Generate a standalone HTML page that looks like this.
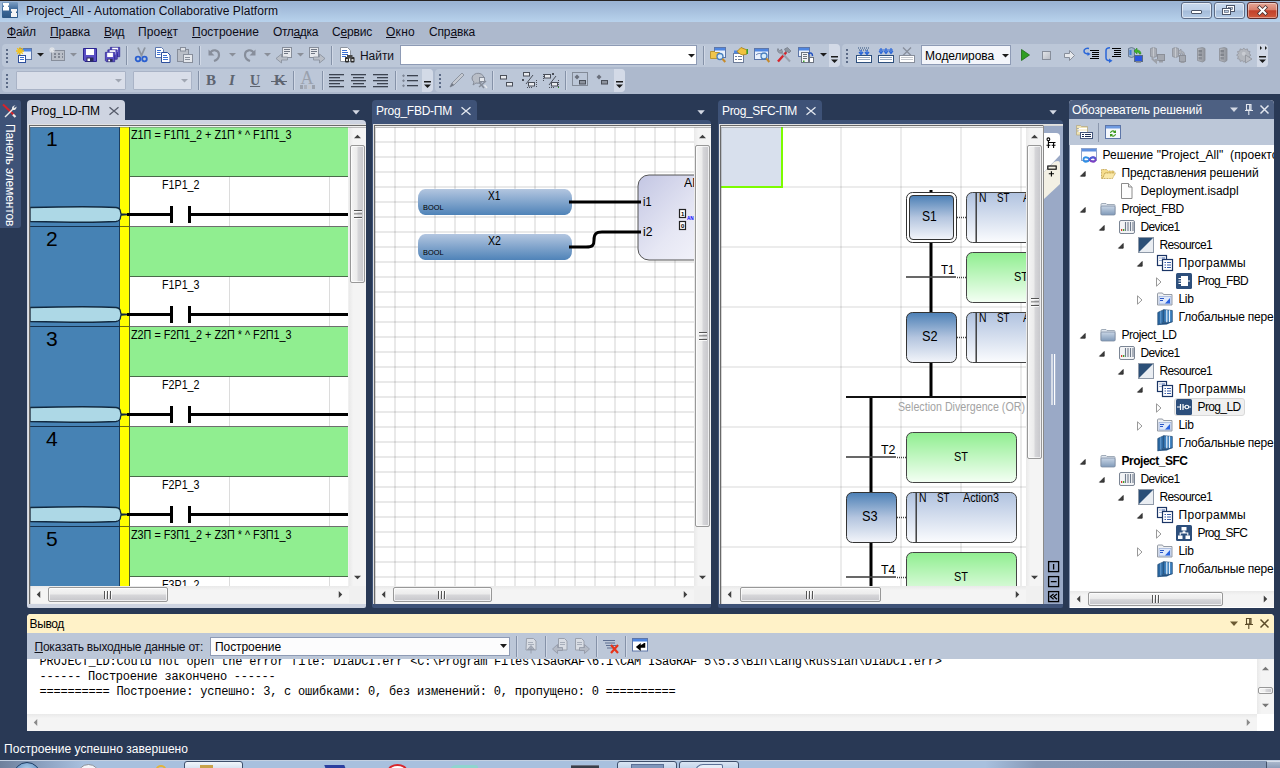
<!DOCTYPE html>
<html lang="ru">
<head>
<meta charset="utf-8">
<title>Project_All - Automation Collaborative Platform</title>
<style>
*{box-sizing:border-box;margin:0;padding:0}
html,body{width:1280px;height:768px;overflow:hidden}
body{position:relative;background:#293955;font-family:"Liberation Sans",sans-serif;font-size:12px;color:#000}
.a{position:absolute}
.t{position:absolute;white-space:nowrap;line-height:1;transform-origin:0 50%}
svg{overflow:visible}
.tb{position:absolute;background:#bcc7d8;border-radius:4px}
.ov{position:absolute;background:#d3dae7;border-radius:0 4px 4px 0}
.gd{position:absolute;width:2px;height:2px;background:#5b6a86}
.sep{position:absolute;width:1px;background:#8592a8;box-shadow:1px 0 0 #d0d8e6}
.sb{position:absolute;background:#f0f0f0}
.thv{position:absolute;border:1px solid #989898;border-radius:2px;background:linear-gradient(90deg,#f5f5f5 0,#ececec 45%,#d6d6d9 55%,#c6c6ca 100%);box-shadow:inset 0 0 0 1px rgba(255,255,255,.7)}
.thh{position:absolute;border:1px solid #989898;border-radius:2px;background:linear-gradient(180deg,#f5f5f5 0,#ececec 45%,#d6d6d9 55%,#c6c6ca 100%);box-shadow:inset 0 0 0 1px rgba(255,255,255,.7)}
.arr{position:absolute;width:0;height:0;border:4px solid transparent}
.au{border-bottom:4px solid #404040;border-top:0;border-left-width:4px;border-right-width:4px}
.ad{border-top:4px solid #404040;border-bottom:0}
.al{border-right:4px solid #404040;border-left:0}
.ar{border-left:4px solid #404040;border-right:0}
</style>
</head>
<body>
<div class="a" style="left:0px;top:0px;width:1280px;height:22px;background:linear-gradient(180deg,#9bb4d4 0,#9bb4d4 10%,#b8d2ec 100%);border-top:1px solid #262322"></div>
<svg class="a" style="left:2px;top:2px;" width="16" height="16" viewBox="0 0 16 16"><defs><linearGradient id="gapp" x1="0" y1="0" x2="0" y2="1"><stop offset="0" stop-color="#7d9fc4"/><stop offset=".45" stop-color="#3f6a9a"/><stop offset="1" stop-color="#2c5684"/></linearGradient></defs><rect x="0" y="0" width="16" height="16" rx="1" fill="url(#gapp)"/><path d="M1 1h6v2.500h-1v1.500h1v3.500h-6v-3.500h1v-1.500h-1z" fill="#fff"/><path d="M9 7h6v2.500h-1v1.500h1v4h-6v-4h1v-1.500h-1z" fill="#f4f4f4"/></svg>
<div class="t" style="left:26px;top:5.44px;color:#0c0c18;letter-spacing:0.054px;text-shadow:0 0 5px rgba(255,255,255,.55);">Project_All - Automation Collaborative Platform</div>
<div class="a" style="left:1181px;top:2px;width:31px;height:17px;border:1px solid #5d6b85;border-radius:3px;background:linear-gradient(180deg,#c9d9ee 0,#bccfe8 48%,#a4bbd8 52%,#b5cbe6 100%);box-shadow:inset 0 0 0 1px rgba(255,255,255,.55)"></div>
<div class="a" style="left:1191px;top:10px;width:11px;height:4px;border:1px solid #4b5468;background:#fff;border-radius:1px"></div>
<div class="a" style="left:1214px;top:2px;width:31px;height:17px;border:1px solid #5d6b85;border-radius:3px;background:linear-gradient(180deg,#c9d9ee 0,#bccfe8 48%,#a4bbd8 52%,#b5cbe6 100%);box-shadow:inset 0 0 0 1px rgba(255,255,255,.55)"></div>
<svg class="a" style="left:1222px;top:5px;" width="14" height="11" viewBox="0 0 14 11"><rect x="4.5" y="0.5" width="8" height="6" fill="#fff" stroke="#4b5468"/><rect x="6.5" y="2.5" width="4" height="2" fill="#b9cde6" stroke="#4b5468" stroke-width=".6"/><rect x="0.5" y="3.5" width="8" height="6" fill="#fff" stroke="#4b5468"/><rect x="2.5" y="5.5" width="4" height="2" fill="#b9cde6" stroke="#4b5468" stroke-width=".6"/></svg>
<div class="a" style="left:1247px;top:2px;width:31px;height:17px;border:1px solid #5a2a2a;border-radius:3px;background:linear-gradient(180deg,#e5a898 0,#d77e6b 45%,#c2402a 52%,#cf5a3c 100%);box-shadow:inset 0 0 0 1px rgba(255,255,255,.4)"></div>
<svg class="a" style="left:1257px;top:6px;" width="12" height="9" viewBox="0 0 12 9"><path d="M2.500 1.500L8.500 7.500M8.500 1.500L2.500 7.500" stroke="#4a3030" stroke-width="3.600" stroke-linecap="square"/><path d="M2.500 1.500L8.500 7.500M8.500 1.500L2.500 7.500" stroke="#fff" stroke-width="2" stroke-linecap="square"/></svg>
<div class="a" style="left:0px;top:22px;width:1280px;height:21px;background:#adb9cd"></div>
<div class="t" style="left:7px;top:26.04px;color:#0c0c18;letter-spacing:-0.129px;"><u>Ф</u>айл</div>
<div class="t" style="left:50px;top:26.04px;color:#0c0c18;letter-spacing:-0.091px;"><u>П</u>равка</div>
<div class="t" style="left:104px;top:26.04px;color:#0c0c18;letter-spacing:-0.578px;"><u>В</u>ид</div>
<div class="t" style="left:138px;top:26.04px;color:#0c0c18;letter-spacing:0.076px;">Прое<u>к</u>т</div>
<div class="t" style="left:192px;top:26.04px;color:#0c0c18;letter-spacing:0.017px;"><u>П</u>остроение</div>
<div class="t" style="left:273px;top:26.04px;color:#0c0c18;letter-spacing:-0.353px;">Отл<u>а</u>дка</div>
<div class="t" style="left:332px;top:26.04px;color:#0c0c18;letter-spacing:-0.188px;">С<u>е</u>рвис</div>
<div class="t" style="left:386px;top:26.04px;color:#0c0c18;letter-spacing:0.273px;"><u>О</u>кно</div>
<div class="t" style="left:429px;top:26.04px;color:#0c0c18;letter-spacing:-0.156px;">Спр<u>а</u>вка</div>
<div class="a" style="left:0px;top:43px;width:1280px;height:51px;background:#adb9cd"></div>
<!--TOOLBARS-->
<div class="tb" style="left:2px;top:43.5px;width:838px;height:23.0px;"></div>
<div class="gd" style="left:6px;top:48.5px;width:2px;height:2px;"></div>
<div class="gd" style="left:6px;top:52.5px;width:2px;height:2px;"></div>
<div class="gd" style="left:6px;top:56.5px;width:2px;height:2px;"></div>
<div class="gd" style="left:6px;top:60.5px;width:2px;height:2px;"></div>
<div class="ov" style="left:829px;top:43.5px;width:11px;height:23.0px;"></div>
<svg class="a" style="left:831px;top:55.5px;" width="7" height="8" viewBox="0 0 7 8"><rect x="0" y="0" width="7" height="1.500" fill="#1b1b1b"/><polygon points="0,3.500 7,3.500 3.500,7" fill="#1b1b1b"/></svg>
<div class="tb" style="left:842px;top:43.5px;width:426px;height:23.0px;"></div>
<div class="gd" style="left:846px;top:48.5px;width:2px;height:2px;"></div>
<div class="gd" style="left:846px;top:52.5px;width:2px;height:2px;"></div>
<div class="gd" style="left:846px;top:56.5px;width:2px;height:2px;"></div>
<div class="gd" style="left:846px;top:60.5px;width:2px;height:2px;"></div>
<div class="ov" style="left:1257px;top:43.5px;width:11px;height:23.0px;"></div>
<svg class="a" style="left:1259px;top:55.5px;" width="7" height="8" viewBox="0 0 7 8"><rect x="0" y="0" width="7" height="1.500" fill="#1b1b1b"/><polygon points="0,3.500 7,3.500 3.500,7" fill="#1b1b1b"/></svg>
<div class="tb" style="left:2px;top:68.5px;width:431px;height:23.5px;"></div>
<div class="gd" style="left:6px;top:73.5px;width:2px;height:2px;"></div>
<div class="gd" style="left:6px;top:77.5px;width:2px;height:2px;"></div>
<div class="gd" style="left:6px;top:81.5px;width:2px;height:2px;"></div>
<div class="gd" style="left:6px;top:85.5px;width:2px;height:2px;"></div>
<div class="ov" style="left:422px;top:68.5px;width:11px;height:23.5px;"></div>
<svg class="a" style="left:424px;top:81px;" width="7" height="8" viewBox="0 0 7 8"><rect x="0" y="0" width="7" height="1.500" fill="#1b1b1b"/><polygon points="0,3.500 7,3.500 3.500,7" fill="#1b1b1b"/></svg>
<div class="tb" style="left:435px;top:68.5px;width:190px;height:23.5px;"></div>
<div class="gd" style="left:439px;top:73.5px;width:2px;height:2px;"></div>
<div class="gd" style="left:439px;top:77.5px;width:2px;height:2px;"></div>
<div class="gd" style="left:439px;top:81.5px;width:2px;height:2px;"></div>
<div class="gd" style="left:439px;top:85.5px;width:2px;height:2px;"></div>
<div class="ov" style="left:614px;top:68.5px;width:11px;height:23.5px;"></div>
<svg class="a" style="left:616px;top:81px;" width="7" height="8" viewBox="0 0 7 8"><rect x="0" y="0" width="7" height="1.500" fill="#1b1b1b"/><polygon points="0,3.500 7,3.500 3.500,7" fill="#1b1b1b"/></svg>
<svg class="a" style="left:16px;top:47px;" width="16" height="16" viewBox="0 0 16 16"><rect x="3.500" y="1.500" width="12" height="11" fill="#e9f0fb" stroke="#5d76a8"/><rect x="4" y="2" width="11" height="2.500" fill="#4f86e0"/><rect x="2.500" y="8.500" width="7" height="7" fill="#fff" stroke="#2d4f9c"/><path d="M4 10.500h4M4 12.500h4" stroke="#3b6fd1"/><path d="M4 0v8M0 4h8M1.200 1.200l5.600 5.600M6.800 1.200l-5.600 5.600" stroke="#f2c21a" stroke-width="1.300"/></svg>
<svg class="a" style="left:37px;top:53px;" width="7" height="4" viewBox="0 0 7 4"><polygon points="0,0 7,0 3.500,3.500" fill="#1b1b1b"/></svg>
<svg class="a" style="left:49px;top:47px;" width="16" height="16" viewBox="0 0 16 16"><rect x="2.500" y="3.500" width="13" height="10" fill="#b9bec7" stroke="#878e9b"/><path d="M5 7h2M9 7h2M13 7h1M5 10h2M9 10h2M13 10h1" stroke="#6f7683" stroke-width="1.500"/><path d="M3 0v6M0 3h6M.900 .900l4.200 4.200M5.100 .900l-4.200 4.200" stroke="#e3e6ea" stroke-width="1.100"/></svg>
<svg class="a" style="left:70px;top:53px;" width="7" height="4" viewBox="0 0 7 4"><polygon points="0,0 7,0 3.500,3.500" fill="#8a8f99"/></svg>
<svg class="a" style="left:83px;top:48px;" width="16" height="16" viewBox="0 0 16 16"><path d="M.5 .5h13v13h-11.500l-1.500-1.500z" fill="#5a4fc4" stroke="#2b2490"/><rect x="3" y="1" width="8" height="6" fill="#fff"/><rect x="3.500" y="9.500" width="7" height="4" fill="#2b2b5a"/><rect x="4.500" y="10.500" width="2.500" height="2.500" fill="#fff"/></svg>
<svg class="a" style="left:105px;top:47px;" width="16" height="16" viewBox="0 0 16 16"><g transform="translate(5,0) scale(.72)"><path d="M.5 .5h13v13h-11.500l-1.500-1.500z" fill="#5a4fc4" stroke="#2b2490"/><rect x="3" y="1" width="8" height="6" fill="#fff"/><rect x="3.500" y="9.500" width="7" height="4" fill="#2b2b5a"/><rect x="4.500" y="10.500" width="2.500" height="2.500" fill="#fff"/></g><g transform="translate(2.500,2.500) scale(.72)"><path d="M.5 .5h13v13h-11.500l-1.500-1.500z" fill="#5a4fc4" stroke="#2b2490"/><rect x="3" y="1" width="8" height="6" fill="#fff"/><rect x="3.500" y="9.500" width="7" height="4" fill="#2b2b5a"/><rect x="4.500" y="10.500" width="2.500" height="2.500" fill="#fff"/></g><g transform="translate(0,5) scale(.72)"><path d="M.5 .5h13v13h-11.500l-1.500-1.500z" fill="#5a4fc4" stroke="#2b2490"/><rect x="3" y="1" width="8" height="6" fill="#fff"/><rect x="3.500" y="9.500" width="7" height="4" fill="#2b2b5a"/><rect x="4.500" y="10.500" width="2.500" height="2.500" fill="#fff"/></g></svg>
<div class="sep" style="left:126px;top:45.5px;width:1px;height:19px;"></div>
<svg class="a" style="left:134px;top:47px;" width="16" height="16" viewBox="0 0 16 16"><path d="M4 .5l4 9M11 .5l-4 9" stroke="#8d949f" stroke-width="1.800"/><circle cx="4" cy="12" r="2.300" fill="none" stroke="#2a5fd0" stroke-width="1.800"/><circle cx="10.500" cy="12" r="2.300" fill="none" stroke="#2a5fd0" stroke-width="1.800"/></svg>
<svg class="a" style="left:155px;top:47px;" width="16" height="16" viewBox="0 0 16 16"><path d="M.5 .5h6l2 2v8h-8z" fill="#fff" stroke="#5b77b0"/><path d="M2 3.500h4M2 5.500h3.500M2 7.500h3.500" stroke="#3b6fd1"/><path d="M6.500 5.500h6l2.500 2.500v7.500h-8.500z" fill="#fff" stroke="#2d4f9c"/><path d="M8 8.500h4M8 10.500h5M8 12.500h5" stroke="#3b6fd1"/></svg>
<svg class="a" style="left:177px;top:47px;" width="16" height="16" viewBox="0 0 16 16"><rect x=".5" y="2.500" width="11" height="12" fill="#b9bec7" stroke="#878e9b"/><rect x="3.500" y=".5" width="5" height="3.500" fill="#dfe2e7" stroke="#878e9b"/><rect x="6.500" y="7.500" width="9" height="8" fill="#e4e7ec" stroke="#878e9b"/><path d="M8 10.500h5M8 12.500h5" stroke="#878e9b"/></svg>
<div class="sep" style="left:199px;top:45.5px;width:1px;height:19px;"></div>
<svg class="a" style="left:208px;top:47px;" width="16" height="16" viewBox="0 0 16 16"><path d="M2 6.500c2-5 9-4 9 1.500 0 3-2 5-5 6" fill="none" stroke="#878e9b" stroke-width="2.200"/><path d="M.5 2.500v6h6z" fill="#878e9b"/></svg>
<svg class="a" style="left:229px;top:53px;" width="7" height="4" viewBox="0 0 7 4"><polygon points="0,0 7,0 3.500,3.500" fill="#8a8f99"/></svg>
<svg class="a" style="left:242px;top:47px;" width="16" height="16" viewBox="0 0 16 16"><path d="M12 6.500c-2-5-9-4-9 1.500 0 3 2 5 5 6" fill="none" stroke="#878e9b" stroke-width="2.200"/><path d="M13.500 2.500v6h-6z" fill="#878e9b"/></svg>
<svg class="a" style="left:264px;top:53px;" width="7" height="4" viewBox="0 0 7 4"><polygon points="0,0 7,0 3.500,3.500" fill="#8a8f99"/></svg>
<svg class="a" style="left:276px;top:47px;" width="16" height="16" viewBox="0 0 16 16"><rect x="6.500" y=".5" width="9" height="10" fill="#e6e8ec" stroke="#878e9b"/><path d="M8 2.500h6M8 4.500h6M8 6.500h4" stroke="#6f7683"/><path d="M0 11.500l5.500-4.500v3h6v3h-6v3z" fill="#b9bec7" stroke="#878e9b" stroke-width=".8"/></svg>
<svg class="a" style="left:297px;top:53px;" width="7" height="4" viewBox="0 0 7 4"><polygon points="0,0 7,0 3.500,3.500" fill="#8a8f99"/></svg>
<svg class="a" style="left:309px;top:47px;" width="16" height="16" viewBox="0 0 16 16"><rect x=".5" y=".5" width="9" height="10" fill="#e6e8ec" stroke="#878e9b"/><path d="M2 2.500h6M2 4.500h6M2 6.500h4" stroke="#6f7683"/><path d="M16 11.500l-5.500-4.500v3h-6v3h6v3z" fill="#b9bec7" stroke="#878e9b" stroke-width=".8"/></svg>
<div class="sep" style="left:331px;top:45.5px;width:1px;height:19px;"></div>
<svg class="a" style="left:339px;top:47px;" width="16" height="16" viewBox="0 0 16 16"><path d="M1.500 .5h7l3 3v11h-10z" fill="#fff" stroke="#8d949f"/><path d="M3 3.500h5M3 5.500h6M3 7.500h6M3 9.500h4" stroke="#3b6fd1"/><rect x="6" y="10" width="4" height="5.500" rx="1" fill="#2b2b2b"/><rect x="11.500" y="10" width="4" height="5.500" rx="1" fill="#2b2b2b"/><rect x="8" y="8" width="5.500" height="3.500" fill="#4a4a4a"/><rect x="7" y="12" width="2" height="2" fill="#cfcfcf"/><rect x="12.500" y="12" width="2" height="2" fill="#cfcfcf"/></svg>
<div class="t" style="left:360px;top:49.64px;color:#101018;letter-spacing:-0.050px;">Найти</div>
<div class="a" style="left:400px;top:45px;width:297px;height:20px;background:#fff;border:1px solid #8e9bb5"></div>
<svg class="a" style="left:688px;top:54px;" width="7" height="4" viewBox="0 0 7 4"><polygon points="0,0 7,0 3.500,3.500" fill="#1b1b1b"/></svg>
<div class="sep" style="left:703px;top:45.5px;width:1px;height:19px;"></div>
<svg class="a" style="left:710px;top:47px;" width="16" height="16" viewBox="0 0 16 16"><rect x="4.500" y=".5" width="11" height="10" fill="#eaf1fc" stroke="#5d76a8"/><rect x="5" y="1" width="10" height="2.500" fill="#4f86e0"/><path d="M.5 4.500h4l1 1h4v6h-9z" fill="#f1c54b" stroke="#b48a1c" stroke-width=".8"/><circle cx="10" cy="9.500" r="3" fill="#d8ecfb" stroke="#4a7fbf" stroke-width="1.300"/><path d="M12.300 11.800l3 3.200" stroke="#c78a2a" stroke-width="2"/></svg>
<svg class="a" style="left:732px;top:47px;" width="16" height="16" viewBox="0 0 16 16"><rect x="1.500" y="6.500" width="10" height="9" fill="#fff" stroke="#6d7c99"/><path d="M3 9.500h2M6 9.500h4M3 12.500h2M6 12.500h4" stroke="#6d7c99"/><rect x="2" y="3.500" width="4" height="3" fill="#4f86e0"/><path d="M5 4.500l4-4 6 2.500v4l-4 1-3-1z" fill="#f0c23e" stroke="#a67b12" stroke-width=".8"/><rect x="14.500" y="2" width="1.500" height="5" fill="#3ca32c"/></svg>
<svg class="a" style="left:754px;top:47px;" width="16" height="16" viewBox="0 0 16 16"><rect x=".5" y="1.500" width="14" height="11" fill="#eaf1fc" stroke="#5d76a8"/><rect x="1" y="2" width="13" height="2.500" fill="#4f86e0"/><path d="M2 8c2-2 5-2 7 0" stroke="#5d76a8" fill="none"/><circle cx="10" cy="9" r="3" fill="#d8ecfb" stroke="#4a7fbf" stroke-width="1.300"/><path d="M12.300 11.300l3 3.700" stroke="#c78a2a" stroke-width="2"/></svg>
<svg class="a" style="left:776px;top:47px;" width="16" height="16" viewBox="0 0 16 16"><path d="M2 14.500l8.500-9.500" stroke="#d8232a" stroke-width="2.400"/><path d="M8.500 2l3-1.500 3.500 3.500-2 2-1.500-1.500-1.500 1z" fill="#8d949f" stroke="#6a717c" stroke-width=".6"/><path d="M14 14.500l-8.500-9" stroke="#9aa1ad" stroke-width="2"/><path d="M2 1.500a3 3 0 0 0 3.500 4.500l1-1-1-3-1.500 2-1.500-1z" fill="#9aa1ad" stroke="#6a717c" stroke-width=".6"/></svg>
<svg class="a" style="left:798px;top:47px;" width="16" height="16" viewBox="0 0 16 16"><rect x=".5" y=".5" width="11" height="9" fill="#eaf1fc" stroke="#5d76a8"/><rect x="1" y="1" width="10" height="2.500" fill="#4f86e0"/><rect x="3.500" y="5.500" width="7" height="10" fill="#f3f4f6" stroke="#6d7480"/><path d="M5 7.500h4M5 9.500h4M5 11.500h4" stroke="#6d7480"/><rect x="5" y="13.500" width="1.500" height="1.500" fill="#3ca32c"/><path d="M10.500 7c2-2 4-1 4 2" fill="none" stroke="#1f4fc0" stroke-width="1.500"/><rect x="11.500" y="10.500" width="4" height="5" fill="#fff" stroke="#6d7480"/></svg>
<svg class="a" style="left:820px;top:53px;" width="7" height="4" viewBox="0 0 7 4"><polygon points="0,0 7,0 3.500,3.500" fill="#1b1b1b"/></svg>
<svg class="a" style="left:856px;top:47px;" width="16" height="16" viewBox="0 0 16 16"><rect x=".5" y="8.500" width="15" height="7" fill="#fff" stroke="#2d4f7c" stroke-width="1"/><path d="M2.500 10.500h11M2.500 12.500h11" stroke="#2d4f7c" stroke-dasharray="1 1"/><path d="M2 1h12M3 3h10" stroke="#2d4f7c" stroke-dasharray="1 1"/><path d="M5 3v4M11 3v4M3 5l2 2.500 2-2.500M9 5l2 2.500 2-2.500" stroke="#2a66d8" stroke-width="1.300" fill="none"/></svg>
<svg class="a" style="left:878px;top:47px;" width="16" height="16" viewBox="0 0 16 16"><rect x=".5" y="8.500" width="15" height="7" fill="#fff" stroke="#2d4f7c" stroke-width="1"/><path d="M2.500 10.500h11M2.500 12.500h11" stroke="#2d4f7c" stroke-dasharray="1 1"/><path d="M3 1v5M8 1v5M13 1v5M1 4l2 2.500 2-2.500M6 4l2 2.500 2-2.500M11 4l2 2.500 2-2.500M1 3h14" stroke="#2a66d8" stroke-width="1.200" fill="none"/></svg>
<svg class="a" style="left:899px;top:47px;" width="16" height="16" viewBox="0 0 16 16"><rect x=".5" y="8.500" width="15" height="7" fill="#fff" stroke="#878e9b" stroke-width="1"/><path d="M2.500 10.500h11M2.500 12.500h11" stroke="#878e9b" stroke-dasharray="1 1"/><path d="M4 .5l8 8M12 .5l-8 8" stroke="#878e9b" stroke-width="1.300"/></svg>
<div class="a" style="left:921px;top:45px;width:90px;height:20px;background:#f3f5fa;border:1px solid #8e9bb5"></div>
<div class="t" style="left:925px;top:49.64px;letter-spacing:-0.080px;">Моделирова</div>
<svg class="a" style="left:1002px;top:54px;" width="7" height="4" viewBox="0 0 7 4"><polygon points="0,0 7,0 3.500,3.500" fill="#1b1b1b"/></svg>
<svg class="a" style="left:1021px;top:49px;" width="9" height="12" viewBox="0 0 9 12"><polygon points="0.500,0.500 8.500,6 0.500,11.500" fill="#2f9e23" stroke="#1d6b16" stroke-width=".8"/></svg>
<div class="a" style="left:1042px;top:51px;width:9px;height:9px;background:linear-gradient(135deg,#e2e4e8,#b9bdc5);border:1px solid #878e9b"></div>
<svg class="a" style="left:1064px;top:50px;" width="11" height="11" viewBox="0 0 11 11"><path d="M.5 3.500h5v-3l5 5-5 5v-3h-5z" fill="#e6e8ec" stroke="#878e9b"/></svg>
<svg class="a" style="left:1083px;top:47px;" width="16" height="16" viewBox="0 0 16 16"><path d="M7 3.500h9M9 5.500h7M9 7.500h7M9 9.500h7M7 11.500h9" stroke="#000" stroke-width="1"/><path d="M6 7c-2 0-5-.5-5-3s3-3 5-2.500" fill="none" stroke="#2a66d8" stroke-width="1.500"/><path d="M4.500 5l3 2-3 2z" fill="#2a66d8"/></svg>
<svg class="a" style="left:1105px;top:47px;" width="16" height="16" viewBox="0 0 16 16"><path d="M7 1.500h9M9 3.500h7M9 5.500h7M9 7.500h7M7 9.500h9" stroke="#000" stroke-width="1"/><path d="M5 .8c-3 0-4 1-4 3v7c0 2 1 3 4 3" fill="none" stroke="#2a66d8" stroke-width="1.500"/><path d="M4 11.500l3.500 2.300-3.500 2.200z" fill="#2a66d8"/></svg>
<svg class="a" style="left:1127px;top:47px;" width="16" height="16" viewBox="0 0 16 16"><path d="M1.500 1.500l3-1 3 1v8l-3 1-3-1z" fill="#9fb3cc" stroke="#5a6b84" stroke-width=".8"/><rect x="2.500" y="3" width="2" height="5" fill="#3f7fd8"/><rect x="7.500" y="8.500" width="8" height="6" fill="#2a56e0" stroke="#5a6b84"/><rect x="9" y="14.500" width="5" height="1.500" fill="#8d949f"/><path d="M14 7c0-3-2-4-4-4v-2l-3 3 3 3v-2c1.500 0 2.500 1 2 2z" fill="#3fb52a" stroke="#24801a" stroke-width=".5"/></svg>
<svg class="a" style="left:1149px;top:47px;" width="16" height="16" viewBox="0 0 16 16"><path d="M1.500 1.500l3-1 3 1v8l-3 1-3-1z" fill="#a9adb5" stroke="#8b8f98" stroke-width=".8"/><path d="M4.500 .5v10" stroke="#c6c9cf" stroke-width="1"/><rect x="8.500" y="7.500" width="7" height="6" fill="#a4a8b0" stroke="#8b8f98"/><rect x="10" y="14" width="4" height="1.500" fill="#9a9ea6"/><path d="M3.500 9.500v2.500l3.500 3v-2h2.500" fill="none" stroke="#9da1a9" stroke-width="2"/></svg>
<svg class="a" style="left:1171px;top:47px;" width="16" height="16" viewBox="0 0 16 16"><path d="M1.500 1.500l3-1 3 1v8l-3 1-3-1z" fill="#a9adb5" stroke="#8b8f98" stroke-width=".8"/><path d="M4.500 .5v10" stroke="#c6c9cf" stroke-width="1"/><rect x="8.500" y="8.500" width="6" height="6" fill="#a4a8b0" stroke="#8b8f98"/><rect x="9.500" y="14.500" width="4" height="1.500" fill="#9a9ea6"/><path d="M13.500 8c0-3-1.500-4-3.500-4v-2l-3 3 3 3v-2c1 0 2 .5 1.500 2z" fill="#aeb2b9" stroke="#8b8f98" stroke-width=".6"/></svg>
<svg class="a" style="left:1193px;top:47px;" width="16" height="16" viewBox="0 0 16 16"><defs><linearGradient id="gsrv" x1="0" y1="0" x2="1" y2="0"><stop offset="0" stop-color="#b9bcc2"/><stop offset="1" stop-color="#8e929a"/></linearGradient></defs><path d="M4.500 1.500l5-1 2.500 1v12l-2.500 1.500-5-1.500z" fill="url(#gsrv)" stroke="#8a8e96" stroke-width=".8"/><rect x="5.500" y="3" width="3.500" height="2.500" fill="#80848c"/><rect x="5.500" y="6.500" width="3.500" height="2.500" fill="#80848c"/><rect x="5.500" y="10" width="3.500" height="2.500" fill="#8a8e96"/></svg>
<svg class="a" style="left:1215px;top:47px;" width="16" height="16" viewBox="0 0 16 16"><defs><linearGradient id="gsrv" x1="0" y1="0" x2="1" y2="0"><stop offset="0" stop-color="#b9bcc2"/><stop offset="1" stop-color="#8e929a"/></linearGradient></defs><path d="M4.500 1.500l5-1 2.500 1v12l-2.500 1.500-5-1.500z" fill="url(#gsrv)" stroke="#8a8e96" stroke-width=".8"/><rect x="5.500" y="3" width="3.500" height="2.500" fill="#80848c"/><rect x="5.500" y="6.500" width="3.500" height="2.500" fill="#80848c"/><rect x="5.500" y="10" width="3.500" height="2.500" fill="#8a8e96"/></svg>
<svg class="a" style="left:1237px;top:47px;" width="16" height="16" viewBox="0 0 16 16"><path d="M7 .5l1.500 2 2.500-1 .5 2.500 2.500 .5-1 2.500 2 1.500-2 1.500 1 2.500-2.500 .5-.5 2.500-2.500-1-1.500 2-1.500-2-2.500 1-.5-2.500-2.500-.5 1-2.500-2-1.500 2-1.500-1-2.500 2.500-.5 .5-2.500 2.500 1z" fill="#b3b7be" stroke="#8f939b" stroke-width=".8" transform="translate(.5,.5) scale(.9)"/><circle cx="6.800" cy="6.800" r="2" fill="#c9ccd2"/><path d="M8.500 8l6.500 4-6.500 4z" fill="#b9bcc3" stroke="#8f939b" stroke-width=".8"/></svg>
<svg class="a" style="left:1259px;top:46px;" width="9" height="4" viewBox="0 0 9 4"><path d="M1 0l2 2-2 2zM6 0l2 2-2 2z" fill="#1b1b1b"/></svg>
<div class="a" style="left:16px;top:70.5px;width:110px;height:19px;background:#d9dee9;border:1px solid #a9b3c6;border-radius:1px"></div>
<svg class="a" style="left:115px;top:79px;" width="7" height="4" viewBox="0 0 7 4"><polygon points="0,0 7,0 3.500,3.500" fill="#a0a6b2"/></svg>
<div class="a" style="left:133px;top:70.5px;width:59px;height:19px;background:#d9dee9;border:1px solid #a9b3c6;border-radius:1px"></div>
<svg class="a" style="left:181px;top:79px;" width="7" height="4" viewBox="0 0 7 4"><polygon points="0,0 7,0 3.500,3.500" fill="#a0a6b2"/></svg>
<div class="sep" style="left:198px;top:70.5px;width:1px;height:19px;"></div>
<div class="t" style="left:206px;top:73.43px;font-size:15px;color:#5d6470;font-weight:700;font-family:'Liberation Serif',serif;">B</div>
<div class="t" style="left:229px;top:73.43px;font-size:15px;color:#5d6470;font-weight:700;font-family:'Liberation Serif',serif;font-style:italic;">I</div>
<div class="t" style="left:250px;top:73.52px;font-size:14px;color:#5d6470;font-weight:700;font-family:'Liberation Serif',serif;text-decoration:underline;">U</div>
<div class="t" style="left:274px;top:73.43px;font-size:15px;color:#5d6470;font-weight:700;font-family:'Liberation Serif',serif;">K</div>
<div class="a" style="left:271px;top:80.5px;width:16px;height:1.5px;background:#5d6470"></div>
<div class="sep" style="left:293px;top:70.5px;width:1px;height:19px;"></div>
<div class="t" style="left:300.5px;top:68.95px;font-size:18px;color:#9aa1ad;font-family:'Liberation Serif',serif;">A</div>
<svg class="a" style="left:300px;top:85px;" width="16" height="4" viewBox="0 0 16 4"><rect x="0" y="0" width="3" height="4" fill="#9aa1ad"/><rect x="4" y="0" width="3" height="4" fill="#aab0bb"/><rect x="8" y="0" width="3" height="4" fill="#c3c7cf"/><rect x="12" y="0" width="3" height="4" fill="#9aa1ad"/></svg>
<div class="sep" style="left:322px;top:70.5px;width:1px;height:19px;"></div>
<svg class="a" style="left:329px;top:74px;" width="16" height="13" viewBox="0 0 16 13"><rect x="0" y="0" width="15" height="1.300" fill="#3c4350"/><rect x="0" y="3" width="11" height="1.300" fill="#3c4350"/><rect x="0" y="6" width="15" height="1.300" fill="#3c4350"/><rect x="0" y="9" width="11" height="1.300" fill="#3c4350"/><rect x="0" y="12" width="15" height="1.300" fill="#3c4350"/></svg>
<svg class="a" style="left:351px;top:74px;" width="16" height="13" viewBox="0 0 16 13"><rect x="0" y="0" width="15" height="1.300" fill="#3c4350"/><rect x="2" y="3" width="11" height="1.300" fill="#3c4350"/><rect x="0" y="6" width="15" height="1.300" fill="#3c4350"/><rect x="2" y="9" width="11" height="1.300" fill="#3c4350"/><rect x="0" y="12" width="15" height="1.300" fill="#3c4350"/></svg>
<svg class="a" style="left:373px;top:74px;" width="16" height="13" viewBox="0 0 16 13"><rect x="0" y="0" width="15" height="1.300" fill="#3c4350"/><rect x="4" y="3" width="11" height="1.300" fill="#3c4350"/><rect x="0" y="6" width="15" height="1.300" fill="#3c4350"/><rect x="4" y="9" width="11" height="1.300" fill="#3c4350"/><rect x="0" y="12" width="15" height="1.300" fill="#3c4350"/></svg>
<div class="sep" style="left:395px;top:70.5px;width:1px;height:19px;"></div>
<svg class="a" style="left:402px;top:74px;" width="16" height="13" viewBox="0 0 16 13"><rect x="5" y="1" width="11" height="1.300" fill="#3c4350"/><path d="M1.500 0.2l1.500 1.500-1.500 1.500-1.500-1.500z" fill="#7d8594"/><rect x="5" y="6" width="11" height="1.300" fill="#3c4350"/><path d="M1.500 5.2l1.500 1.500-1.500 1.500-1.500-1.500z" fill="#7d8594"/><rect x="5" y="11" width="11" height="1.300" fill="#3c4350"/><path d="M1.500 10.2l1.500 1.500-1.500 1.500-1.500-1.500z" fill="#7d8594"/></svg>
<svg class="a" style="left:449px;top:72px;" width="16" height="16" viewBox="0 0 16 16"><path d="M1 15l2-4 10-10 2 2-10 10z" fill="#c5c9d1" stroke="#878e9b" stroke-width=".9"/><path d="M1 15l2-4 2 2z" fill="#6f7683"/></svg>
<svg class="a" style="left:471px;top:72px;" width="16" height="16" viewBox="0 0 16 16"><path d="M1 6a6 5 0 1 1 4 5l-3 2 1-3a5 5 0 0 1-2-4z" fill="#b9bec7" stroke="#878e9b"/><rect x="8.500" y="5.500" width="5" height="4" fill="#e4e7ec" stroke="#878e9b"/><path d="M8 10l5 6M15 9l-7 6" stroke="#878e9b" stroke-width="1.500"/><path d="M13.500 13l2.500 3" stroke="#e4e7ec" stroke-width="1.500"/></svg>
<div class="sep" style="left:492px;top:70.5px;width:1px;height:19px;"></div>
<svg class="a" style="left:499px;top:72px;" width="16" height="16" viewBox="0 0 16 16"><rect x="1.500" y="3.500" width="6" height="3.500" fill="#e9ebef" stroke="#4a4f59"/><rect x="7.500" y="10.500" width="6" height="3.500" fill="#e9ebef" stroke="#4a4f59"/></svg>
<svg class="a" style="left:521px;top:72px;" width="16" height="16" viewBox="0 0 16 16"><rect x="2.500" y=".5" width="6" height="3.500" fill="#e9ebef" stroke="#4a4f59"/><rect x="7.500" y="10.500" width="6" height="3.500" fill="#e9ebef" stroke="#4a4f59"/><path d="M12 3l-7 9" stroke="#4a4f59"/><rect x="1" y="7" width="2" height="2" fill="#4a4f59"/><path d="M15.500 8v8M6 15.500h6" stroke="#4a4f59" stroke-dasharray="1 1"/></svg>
<svg class="a" style="left:543px;top:72px;" width="16" height="16" viewBox="0 0 16 16"><rect x="1.500" y="2.500" width="6" height="3.500" fill="#e9ebef" stroke="#4a4f59"/><rect x="8.500" y="10.500" width="6" height="3.500" fill="#e9ebef" stroke="#4a4f59"/><path d="M13 4l-7 9" stroke="#4a4f59"/><rect x="9" y="1" width="2" height="2" fill="#4a4f59"/><path d="M.5 2v8M15.500 8v8M6 15.500h6" stroke="#4a4f59" stroke-dasharray="1 1"/><rect x="15" y="15" width="1" height="1" fill="#2a9a1a"/></svg>
<div class="sep" style="left:565px;top:70.5px;width:1px;height:19px;"></div>
<svg class="a" style="left:572px;top:72px;" width="16" height="16" viewBox="0 0 16 16"><rect x=".5" y=".5" width="15" height="13" fill="none" stroke="#4a4f59" stroke-dasharray="1 1"/><path d="M5 2.500l2.500 2.500-2.500 2.500-2.500-2.500z" fill="#6a707c"/><rect x="7.500" y="8.500" width="6" height="3.500" fill="#8d939e" stroke="#4a4f59"/></svg>
<svg class="a" style="left:594px;top:72px;" width="16" height="16" viewBox="0 0 16 16"><path d="M5 2.500l2.500 2.500-2.500 2.500-2.500-2.500z" fill="#6a707c"/><rect x="7.500" y="8.500" width="6" height="3.500" fill="#8d939e" stroke="#4a4f59"/></svg>
<!--SIDETAB-->
<div class="a" style="left:0px;top:100px;width:21px;height:128px;background:#3e5277;border-radius:0 3px 3px 0"></div>
<svg class="a" style="left:2px;top:103px;" width="16" height="16" viewBox="0 0 16 16"><path d="M1 1.500L12 12" stroke="#d8232a" stroke-width="2"/><path d="M11 11.500l2.500 2.500" stroke="#e9e9e9" stroke-width="2.200"/><path d="M13.500 2.500a3 3 0 0 0-3.500 3.500l-7.500 7.500 1 1 7.500-7.500a3 3 0 0 0 3.500-3.500l-2 1.500-1-1z" fill="#e9e9e9"/></svg>
<div class="t" style="left:15.500px;top:123.500px;font-size:12px;color:#fff;transform:rotate(90deg);transform-origin:0 0;letter-spacing:-0.125px">Панель элементов</div>
<!--LD-->
<div class="a" style="left:27px;top:100px;width:98px;height:22px;background:#ced4e1;border-radius:4px 4px 0 0"></div>
<div class="a" style="left:27px;top:120px;width:339px;height:488px;background:#ced4e1;border-radius:0 4px 2px 2px"></div>
<div class="t" style="left:31px;top:105.24px;letter-spacing:-0.098px;">Prog_LD-ПМ</div>
<svg class="a" style="left:109px;top:107px;" width="10" height="8" viewBox="0 0 10 8"><path d="M0.500 0.300L9.500 7.700M9.500 0.300L0.500 7.700" stroke="#565c6b" stroke-width="1.300"/></svg>
<svg class="a" style="left:352px;top:109.5px;" width="9" height="6" viewBox="0 0 9 6"><polygon points="0.400,0.300 7.800,0.300 4.100,4.600" fill="#d3d8e3"/></svg>
<div class="a" style="left:28px;top:124px;width:338px;height:480px;background:#f0f0f0;border-left:1px solid #e2e2e2;border-top:1px solid #e2e2e2"></div>
<div class="a" style="left:29px;top:125px;width:337px;height:479px;background:#f0f0f0;border-left:1px solid #696969;border-top:1px solid #696969"></div>
<div class="a" style="left:30px;top:127px;width:318px;height:459px;overflow:hidden;background:#fff">
<div class="a" style="left:0px;top:0px;width:89px;height:99px;background:#4682b4"></div>
<div class="a" style="left:89px;top:0px;width:1px;height:100px;background:#1c3f63"></div>
<div class="a" style="left:90px;top:0px;width:10px;height:100px;background:#ff0"></div>
<div class="a" style="left:99px;top:0px;width:1px;height:100px;background:#50602a"></div>
<div class="a" style="left:100px;top:0px;width:218px;height:49px;background:#90ee90"></div>
<div class="a" style="left:100px;top:49px;width:218px;height:1px;background:#4a6a4a"></div>
<div class="a" style="left:199px;top:50px;width:1px;height:49px;background:#dcdcdc"></div>
<div class="a" style="left:299px;top:50px;width:1px;height:49px;background:#dcdcdc"></div>
<div class="a" style="left:0px;top:99px;width:90px;height:1px;background:#16324f"></div>
<div class="a" style="left:100px;top:99px;width:218px;height:1px;background:#6e6e6e"></div>
<div class="a" style="left:90px;top:99px;width:9px;height:1px;background:#6f6f10"></div>
<svg class="a" style="left:0;top:79px" width="102" height="17" viewBox="0 0 102 17"><path d="M0 1.5 C40 0.5,70 0.5,86 1.5 C90 2,90.5 4,90.5 6 L91 8 L98 8.5 L91 9 L90.5 11 C90.5 13,90 15,86 15.5 C70 16.5,40 16.5,0 15.5 Z" fill="#add8e6" stroke="#10283f" stroke-width="1.3"/></svg>
<div class="a" style="left:97px;top:86px;width:43px;height:3px;background:#000"></div>
<div class="a" style="left:139.5px;top:78.5px;width:3px;height:17.5px;background:#000"></div>
<div class="a" style="left:157.5px;top:78.5px;width:3px;height:17.5px;background:#000"></div>
<div class="a" style="left:160px;top:86px;width:158px;height:3px;background:#000"></div>
<div class="a" style="left:0px;top:100px;width:89px;height:99px;background:#4682b4"></div>
<div class="a" style="left:89px;top:100px;width:1px;height:100px;background:#1c3f63"></div>
<div class="a" style="left:90px;top:100px;width:10px;height:100px;background:#ff0"></div>
<div class="a" style="left:99px;top:100px;width:1px;height:100px;background:#50602a"></div>
<div class="a" style="left:100px;top:100px;width:218px;height:49px;background:#90ee90"></div>
<div class="a" style="left:100px;top:149px;width:218px;height:1px;background:#4a6a4a"></div>
<div class="a" style="left:199px;top:150px;width:1px;height:49px;background:#dcdcdc"></div>
<div class="a" style="left:299px;top:150px;width:1px;height:49px;background:#dcdcdc"></div>
<div class="a" style="left:0px;top:199px;width:90px;height:1px;background:#16324f"></div>
<div class="a" style="left:100px;top:199px;width:218px;height:1px;background:#6e6e6e"></div>
<div class="a" style="left:90px;top:199px;width:9px;height:1px;background:#6f6f10"></div>
<svg class="a" style="left:0;top:179px" width="102" height="17" viewBox="0 0 102 17"><path d="M0 1.5 C40 0.5,70 0.5,86 1.5 C90 2,90.5 4,90.5 6 L91 8 L98 8.5 L91 9 L90.5 11 C90.5 13,90 15,86 15.5 C70 16.5,40 16.5,0 15.5 Z" fill="#add8e6" stroke="#10283f" stroke-width="1.3"/></svg>
<div class="a" style="left:97px;top:186px;width:43px;height:3px;background:#000"></div>
<div class="a" style="left:139.5px;top:178.5px;width:3px;height:17.5px;background:#000"></div>
<div class="a" style="left:157.5px;top:178.5px;width:3px;height:17.5px;background:#000"></div>
<div class="a" style="left:160px;top:186px;width:158px;height:3px;background:#000"></div>
<div class="a" style="left:0px;top:200px;width:89px;height:99px;background:#4682b4"></div>
<div class="a" style="left:89px;top:200px;width:1px;height:100px;background:#1c3f63"></div>
<div class="a" style="left:90px;top:200px;width:10px;height:100px;background:#ff0"></div>
<div class="a" style="left:99px;top:200px;width:1px;height:100px;background:#50602a"></div>
<div class="a" style="left:100px;top:200px;width:218px;height:49px;background:#90ee90"></div>
<div class="a" style="left:100px;top:249px;width:218px;height:1px;background:#4a6a4a"></div>
<div class="a" style="left:199px;top:250px;width:1px;height:49px;background:#dcdcdc"></div>
<div class="a" style="left:299px;top:250px;width:1px;height:49px;background:#dcdcdc"></div>
<div class="a" style="left:0px;top:299px;width:90px;height:1px;background:#16324f"></div>
<div class="a" style="left:100px;top:299px;width:218px;height:1px;background:#6e6e6e"></div>
<div class="a" style="left:90px;top:299px;width:9px;height:1px;background:#6f6f10"></div>
<svg class="a" style="left:0;top:279px" width="102" height="17" viewBox="0 0 102 17"><path d="M0 1.5 C40 0.5,70 0.5,86 1.5 C90 2,90.5 4,90.5 6 L91 8 L98 8.5 L91 9 L90.5 11 C90.5 13,90 15,86 15.5 C70 16.5,40 16.5,0 15.5 Z" fill="#add8e6" stroke="#10283f" stroke-width="1.3"/></svg>
<div class="a" style="left:97px;top:286px;width:43px;height:3px;background:#000"></div>
<div class="a" style="left:139.5px;top:278.5px;width:3px;height:17.5px;background:#000"></div>
<div class="a" style="left:157.5px;top:278.5px;width:3px;height:17.5px;background:#000"></div>
<div class="a" style="left:160px;top:286px;width:158px;height:3px;background:#000"></div>
<div class="a" style="left:0px;top:300px;width:89px;height:99px;background:#4682b4"></div>
<div class="a" style="left:89px;top:300px;width:1px;height:100px;background:#1c3f63"></div>
<div class="a" style="left:90px;top:300px;width:10px;height:100px;background:#ff0"></div>
<div class="a" style="left:99px;top:300px;width:1px;height:100px;background:#50602a"></div>
<div class="a" style="left:100px;top:300px;width:218px;height:49px;background:#90ee90"></div>
<div class="a" style="left:100px;top:349px;width:218px;height:1px;background:#4a6a4a"></div>
<div class="a" style="left:199px;top:350px;width:1px;height:49px;background:#dcdcdc"></div>
<div class="a" style="left:299px;top:350px;width:1px;height:49px;background:#dcdcdc"></div>
<div class="a" style="left:0px;top:399px;width:90px;height:1px;background:#16324f"></div>
<div class="a" style="left:100px;top:399px;width:218px;height:1px;background:#6e6e6e"></div>
<div class="a" style="left:90px;top:399px;width:9px;height:1px;background:#6f6f10"></div>
<svg class="a" style="left:0;top:379px" width="102" height="17" viewBox="0 0 102 17"><path d="M0 1.5 C40 0.5,70 0.5,86 1.5 C90 2,90.5 4,90.5 6 L91 8 L98 8.5 L91 9 L90.5 11 C90.5 13,90 15,86 15.5 C70 16.5,40 16.5,0 15.5 Z" fill="#add8e6" stroke="#10283f" stroke-width="1.3"/></svg>
<div class="a" style="left:97px;top:386px;width:43px;height:3px;background:#000"></div>
<div class="a" style="left:139.5px;top:378.5px;width:3px;height:17.5px;background:#000"></div>
<div class="a" style="left:157.5px;top:378.5px;width:3px;height:17.5px;background:#000"></div>
<div class="a" style="left:160px;top:386px;width:158px;height:3px;background:#000"></div>
<div class="a" style="left:0px;top:400px;width:89px;height:99px;background:#4682b4"></div>
<div class="a" style="left:89px;top:400px;width:1px;height:100px;background:#1c3f63"></div>
<div class="a" style="left:90px;top:400px;width:10px;height:100px;background:#ff0"></div>
<div class="a" style="left:99px;top:400px;width:1px;height:100px;background:#50602a"></div>
<div class="a" style="left:100px;top:400px;width:218px;height:49px;background:#90ee90"></div>
<div class="a" style="left:100px;top:449px;width:218px;height:1px;background:#4a6a4a"></div>
<div class="a" style="left:199px;top:450px;width:1px;height:49px;background:#dcdcdc"></div>
<div class="a" style="left:299px;top:450px;width:1px;height:49px;background:#dcdcdc"></div>
<div class="a" style="left:0px;top:499px;width:90px;height:1px;background:#16324f"></div>
<div class="a" style="left:100px;top:499px;width:218px;height:1px;background:#6e6e6e"></div>
<div class="a" style="left:90px;top:499px;width:9px;height:1px;background:#6f6f10"></div>
<svg class="a" style="left:0;top:479px" width="102" height="17" viewBox="0 0 102 17"><path d="M0 1.5 C40 0.5,70 0.5,86 1.5 C90 2,90.5 4,90.5 6 L91 8 L98 8.5 L91 9 L90.5 11 C90.5 13,90 15,86 15.5 C70 16.5,40 16.5,0 15.5 Z" fill="#add8e6" stroke="#10283f" stroke-width="1.3"/></svg>
<div class="a" style="left:97px;top:486px;width:43px;height:3px;background:#000"></div>
<div class="a" style="left:139.5px;top:478.5px;width:3px;height:17.5px;background:#000"></div>
<div class="a" style="left:157.5px;top:478.5px;width:3px;height:17.5px;background:#000"></div>
<div class="a" style="left:160px;top:486px;width:158px;height:3px;background:#000"></div>
</div>
<div class="t" style="left:46px;top:128.22px;font-size:21px;">1</div>
<div class="t" style="left:46px;top:228.22px;font-size:21px;">2</div>
<div class="t" style="left:46px;top:328.22px;font-size:21px;">3</div>
<div class="t" style="left:46px;top:428.22px;font-size:21px;">4</div>
<div class="t" style="left:46px;top:528.22px;font-size:21px;">5</div>
<div class="t" style="left:131px;top:129.04px;transform:scaleX(0.9006);">Z1П = F1П1_2 + Z1П * ^ F1П1_3</div>
<div class="t" style="left:131px;top:329.04px;transform:scaleX(0.9006);">Z2П = F2П1_2 + Z2П * ^ F2П1_3</div>
<div class="t" style="left:131px;top:529.04px;transform:scaleX(0.9006);">Z3П = F3П1_2 + Z3П * ^ F3П1_3</div>
<div class="t" style="left:161.5px;top:179.04px;transform:scaleX(0.8922);">F1P1_2</div>
<div class="t" style="left:161.5px;top:279.04px;transform:scaleX(0.8922);">F1P1_3</div>
<div class="t" style="left:161.5px;top:379.04px;transform:scaleX(0.8922);">F2P1_2</div>
<div class="t" style="left:161.5px;top:479.04px;transform:scaleX(0.8922);">F2P1_3</div>
<div class="a" style="left:130px;top:577px;width:218px;height:9px;overflow:hidden">
<div class="t" style="left:31.5px;top:2.04px;transform:scaleX(0.8922);">F3P1_2</div>
</div>
<div class="sb" style="left:349px;top:127px;width:17px;height:459px;background:linear-gradient(90deg,#e9e9e9 0,#f4f4f4 25%,#f4f4f4 100%)"></div>
<svg class="a" style="left:349px;top:127px;" width="17" height="459" viewBox="0 0 17 459"><polygon points="5.0,11.25 12.0,11.25 8.5,7.75" fill="#404040"/><polygon points="5.0,448.75 12.0,448.75 8.5,452.25" fill="#404040"/></svg>
<div class="thv" style="left:350px;top:145px;width:15px;height:138px;"></div>
<svg class="a" style="left:353.5px;top:210px;" width="8" height="9" viewBox="0 0 8 9"><rect x="0" y="0.0" width="8" height="1" fill="#555"/><rect x="0" y="1.0" width="8" height="1" fill="#fff" opacity=".8"/><rect x="0" y="3.5" width="8" height="1" fill="#555"/><rect x="0" y="4.5" width="8" height="1" fill="#fff" opacity=".8"/><rect x="0" y="7.0" width="8" height="1" fill="#555"/><rect x="0" y="8.0" width="8" height="1" fill="#fff" opacity=".8"/></svg>
<div class="sb" style="left:30px;top:586px;width:319px;height:17px;background:linear-gradient(180deg,#e9e9e9 0,#f4f4f4 25%,#f4f4f4 100%)"></div>
<svg class="a" style="left:30px;top:586px;" width="319" height="17" viewBox="0 0 319 17"><polygon points="10.25,5.0 10.25,12.0 6.75,8.5" fill="#404040"/><polygon points="308.75,5.0 308.75,12.0 312.25,8.5" fill="#404040"/></svg>
<div class="thh" style="left:48px;top:587px;width:120px;height:15px;"></div>
<svg class="a" style="left:104px;top:590.5px;" width="8" height="8" viewBox="0 0 8 8"><rect x="0" y="0" width="1" height="8" fill="#555"/><rect x="1" y="0" width="1" height="8" fill="#fff" opacity=".8"/><rect x="3" y="0" width="1" height="8" fill="#555"/><rect x="4" y="0" width="1" height="8" fill="#fff" opacity=".8"/><rect x="6" y="0" width="1" height="8" fill="#555"/><rect x="7" y="0" width="1" height="8" fill="#fff" opacity=".8"/></svg>
<div class="a" style="left:30px;top:127px;width:336px;height:1px;background:rgba(90,90,90,.38)"></div>
<div class="a" style="left:30px;top:128px;width:1px;height:476px;background:rgba(90,90,90,.25)"></div>
<!--FBD-->
<div class="a" style="left:372px;top:100px;width:105px;height:22px;background:#3e5277;border-radius:4px 4px 0 0"></div>
<div class="a" style="left:372px;top:120px;width:339px;height:488px;background:#3e5277;border-radius:0 4px 2px 2px"></div>
<div class="t" style="left:376px;top:105.24px;color:#fff;letter-spacing:-0.240px;">Prog_FBD-ПМ</div>
<svg class="a" style="left:461px;top:107px;" width="10" height="8" viewBox="0 0 10 8"><path d="M0.500 0.300L9.500 7.700M9.500 0.300L0.500 7.700" stroke="#e3e7ef" stroke-width="1.300"/></svg>
<svg class="a" style="left:697px;top:109.5px;" width="9" height="6" viewBox="0 0 9 6"><polygon points="0.400,0.300 7.800,0.300 4.100,4.600" fill="#d3d8e3"/></svg>
<div class="a" style="left:373px;top:124px;width:338px;height:480px;background:#f0f0f0;border-left:1px solid #e2e2e2;border-top:1px solid #e2e2e2"></div>
<div class="a" style="left:374px;top:125px;width:337px;height:479px;background:#f0f0f0;border-left:1px solid #696969;border-top:1px solid #696969"></div>
<div class="a" style="left:375px;top:127px;width:319px;height:459px;overflow:hidden;background:#fff">
<svg class="a" style="left:0;top:0" width="319" height="459" viewBox="0 0 319 459"><defs><linearGradient id="gvar" x1="0" y1="0" x2="0" y2="1"><stop offset="0" stop-color="#b3c6e0"/><stop offset="1" stop-color="#4f83b8"/></linearGradient><linearGradient id="gand" x1="0" y1="0" x2="1" y2="1"><stop offset="0" stop-color="#c3c6e3"/><stop offset="0.55" stop-color="#e6e7f4"/><stop offset="1" stop-color="#f6f6fc"/></linearGradient></defs><rect x="19" y="0" width="2" height="459" fill="rgba(0,0,0,.085)"/><rect x="39" y="0" width="2" height="459" fill="rgba(0,0,0,.085)"/><rect x="59" y="0" width="2" height="459" fill="rgba(0,0,0,.085)"/><rect x="79" y="0" width="2" height="459" fill="rgba(0,0,0,.085)"/><rect x="99" y="0" width="2" height="459" fill="rgba(0,0,0,.085)"/><rect x="119" y="0" width="2" height="459" fill="rgba(0,0,0,.085)"/><rect x="139" y="0" width="2" height="459" fill="rgba(0,0,0,.085)"/><rect x="159" y="0" width="2" height="459" fill="rgba(0,0,0,.085)"/><rect x="179" y="0" width="2" height="459" fill="rgba(0,0,0,.085)"/><rect x="199" y="0" width="2" height="459" fill="rgba(0,0,0,.085)"/><rect x="219" y="0" width="2" height="459" fill="rgba(0,0,0,.085)"/><rect x="239" y="0" width="2" height="459" fill="rgba(0,0,0,.085)"/><rect x="259" y="0" width="2" height="459" fill="rgba(0,0,0,.085)"/><rect x="279" y="0" width="2" height="459" fill="rgba(0,0,0,.085)"/><rect x="299" y="0" width="2" height="459" fill="rgba(0,0,0,.085)"/><rect x="0" y="14" width="319" height="2" fill="rgba(0,0,0,.085)"/><rect x="0" y="29" width="319" height="2" fill="rgba(0,0,0,.085)"/><rect x="0" y="44" width="319" height="2" fill="rgba(0,0,0,.085)"/><rect x="0" y="59" width="319" height="2" fill="rgba(0,0,0,.085)"/><rect x="0" y="74" width="319" height="2" fill="rgba(0,0,0,.085)"/><rect x="0" y="89" width="319" height="2" fill="rgba(0,0,0,.085)"/><rect x="0" y="104" width="319" height="2" fill="rgba(0,0,0,.085)"/><rect x="0" y="119" width="319" height="2" fill="rgba(0,0,0,.085)"/><rect x="0" y="134" width="319" height="2" fill="rgba(0,0,0,.085)"/><rect x="0" y="149" width="319" height="2" fill="rgba(0,0,0,.085)"/><rect x="0" y="164" width="319" height="2" fill="rgba(0,0,0,.085)"/><rect x="0" y="179" width="319" height="2" fill="rgba(0,0,0,.085)"/><rect x="0" y="194" width="319" height="2" fill="rgba(0,0,0,.085)"/><rect x="0" y="209" width="319" height="2" fill="rgba(0,0,0,.085)"/><rect x="0" y="224" width="319" height="2" fill="rgba(0,0,0,.085)"/><rect x="0" y="239" width="319" height="2" fill="rgba(0,0,0,.085)"/><rect x="0" y="254" width="319" height="2" fill="rgba(0,0,0,.085)"/><rect x="0" y="269" width="319" height="2" fill="rgba(0,0,0,.085)"/><rect x="0" y="284" width="319" height="2" fill="rgba(0,0,0,.085)"/><rect x="0" y="299" width="319" height="2" fill="rgba(0,0,0,.085)"/><rect x="0" y="314" width="319" height="2" fill="rgba(0,0,0,.085)"/><rect x="0" y="329" width="319" height="2" fill="rgba(0,0,0,.085)"/><rect x="0" y="344" width="319" height="2" fill="rgba(0,0,0,.085)"/><rect x="0" y="359" width="319" height="2" fill="rgba(0,0,0,.085)"/><rect x="0" y="374" width="319" height="2" fill="rgba(0,0,0,.085)"/><rect x="0" y="389" width="319" height="2" fill="rgba(0,0,0,.085)"/><rect x="0" y="404" width="319" height="2" fill="rgba(0,0,0,.085)"/><rect x="0" y="419" width="319" height="2" fill="rgba(0,0,0,.085)"/><rect x="0" y="434" width="319" height="2" fill="rgba(0,0,0,.085)"/><rect x="0" y="449" width="319" height="2" fill="rgba(0,0,0,.085)"/><rect x="43" y="62" width="154" height="26" rx="7" ry="9" fill="url(#gvar)"/><rect x="43" y="107" width="154" height="26" rx="7" ry="9" fill="url(#gvar)"/><rect x="263" y="48" width="80" height="85" rx="11" fill="url(#gand)" stroke="#555" stroke-width="1"/><path d="M194 75 H266" stroke="#000" stroke-width="3" fill="none"/><path d="M194 120 H211 C218 120 219 118 219 113 C219 107 221 105 227 105 H266" stroke="#000" stroke-width="3" fill="none"/><rect x="304.5" y="82.5" width="6" height="8" fill="#fff" stroke="#222" stroke-width="1.2"/><rect x="304.5" y="94.5" width="6" height="8" fill="#fff" stroke="#222" stroke-width="1.2"/></svg>
</div>
<div class="t" style="left:488px;top:189.0px;font-size:13px;transform:scaleX(0.7859);">X1</div>
<div class="t" style="left:488px;top:234.0px;font-size:13px;transform:scaleX(0.8173);">X2</div>
<div class="t" style="left:422.5px;top:204.23px;font-size:8px;transform:scaleX(0.9220);">BOOL</div>
<div class="t" style="left:422.5px;top:249.23px;font-size:8px;transform:scaleX(0.9220);">BOOL</div>
<div class="t" style="left:643px;top:195.0px;font-size:13px;transform:scaleX(0.8395);">i1</div>
<div class="t" style="left:643px;top:225.0px;font-size:13px;transform:scaleX(0.9383);">i2</div>
<div class="a" style="left:680px;top:175px;width:14px;height:60px;overflow:hidden">
<div class="t" style="left:3.5px;top:1.2px;font-size:13px;transform:scaleX(0.9471);">AND</div>
<div class="t" style="left:7px;top:41.27px;font-size:5px;color:#00f;font-weight:700;transform:scaleX(0.9222);">AND</div>
<div class="t" style="left:1px;top:35.72px;font-size:6px;font-weight:700;">1</div>
<div class="t" style="left:1px;top:47.72px;font-size:6px;font-weight:700;">0</div>
</div>
<div class="sb" style="left:694px;top:127px;width:17px;height:459px;background:linear-gradient(90deg,#e9e9e9 0,#f4f4f4 25%,#f4f4f4 100%)"></div>
<svg class="a" style="left:694px;top:127px;" width="17" height="459" viewBox="0 0 17 459"><polygon points="5.0,11.25 12.0,11.25 8.5,7.75" fill="#404040"/><polygon points="5.0,448.75 12.0,448.75 8.5,452.25" fill="#404040"/></svg>
<div class="thv" style="left:695px;top:145px;width:15px;height:382px;"></div>
<svg class="a" style="left:698.5px;top:332px;" width="8" height="9" viewBox="0 0 8 9"><rect x="0" y="0.0" width="8" height="1" fill="#555"/><rect x="0" y="1.0" width="8" height="1" fill="#fff" opacity=".8"/><rect x="0" y="3.5" width="8" height="1" fill="#555"/><rect x="0" y="4.5" width="8" height="1" fill="#fff" opacity=".8"/><rect x="0" y="7.0" width="8" height="1" fill="#555"/><rect x="0" y="8.0" width="8" height="1" fill="#fff" opacity=".8"/></svg>
<div class="sb" style="left:375px;top:586px;width:319px;height:17px;background:linear-gradient(180deg,#e9e9e9 0,#f4f4f4 25%,#f4f4f4 100%)"></div>
<svg class="a" style="left:375px;top:586px;" width="319" height="17" viewBox="0 0 319 17"><polygon points="10.25,5.0 10.25,12.0 6.75,8.5" fill="#404040"/><polygon points="308.75,5.0 308.75,12.0 312.25,8.5" fill="#404040"/></svg>
<div class="thh" style="left:393px;top:587px;width:99px;height:15px;"></div>
<svg class="a" style="left:438px;top:590.5px;" width="8" height="8" viewBox="0 0 8 8"><rect x="0" y="0" width="1" height="8" fill="#555"/><rect x="1" y="0" width="1" height="8" fill="#fff" opacity=".8"/><rect x="3" y="0" width="1" height="8" fill="#555"/><rect x="4" y="0" width="1" height="8" fill="#fff" opacity=".8"/><rect x="6" y="0" width="1" height="8" fill="#555"/><rect x="7" y="0" width="1" height="8" fill="#fff" opacity=".8"/></svg>
<div class="a" style="left:375px;top:127px;width:336px;height:1px;background:rgba(90,90,90,.38)"></div>
<div class="a" style="left:375px;top:128px;width:1px;height:476px;background:rgba(90,90,90,.25)"></div>
<!--SFC-->
<div class="a" style="left:718px;top:100px;width:104px;height:22px;background:#3e5277;border-radius:4px 4px 0 0"></div>
<div class="a" style="left:718px;top:120px;width:345px;height:488px;background:#3e5277;border-radius:0 4px 2px 2px"></div>
<div class="t" style="left:722px;top:105.24px;color:#fff;letter-spacing:-0.331px;">Prog_SFC-ПМ</div>
<svg class="a" style="left:806px;top:107px;" width="10" height="8" viewBox="0 0 10 8"><path d="M0.500 0.300L9.500 7.700M9.500 0.300L0.500 7.700" stroke="#e3e7ef" stroke-width="1.300"/></svg>
<svg class="a" style="left:1049px;top:109.5px;" width="9" height="6" viewBox="0 0 9 6"><polygon points="0.400,0.300 7.800,0.300 4.100,4.600" fill="#d3d8e3"/></svg>
<div class="a" style="left:719px;top:124px;width:344px;height:480px;background:#f0f0f0;border-left:1px solid #e2e2e2;border-top:1px solid #e2e2e2"></div>
<div class="a" style="left:720px;top:125px;width:343px;height:479px;background:#f0f0f0;border-left:1px solid #696969;border-top:1px solid #696969"></div>
<div class="a" style="left:721px;top:127px;width:305px;height:459px;overflow:hidden;background:#fff">
<svg class="a" style="left:0;top:0" width="305" height="459" viewBox="0 0 305 459"><defs><linearGradient id="gstep" x1="0" y1="0" x2="0" y2="1"><stop offset="0" stop-color="#4c80b6"/><stop offset="0.5" stop-color="#b4c5df"/><stop offset="1" stop-color="#f3f5fa"/></linearGradient><linearGradient id="gact" x1="0" y1="0" x2="0" y2="1"><stop offset="0" stop-color="#b0c2df"/><stop offset="1" stop-color="#fbfcfe"/></linearGradient><linearGradient id="gtr" x1="0" y1="0" x2="0" y2="1"><stop offset="0" stop-color="#90ee90"/><stop offset="1" stop-color="#f4fff4"/></linearGradient></defs><rect x="119" y="0" width="2" height="459" fill="rgba(0,0,0,.075)"/><rect x="179" y="0" width="2" height="459" fill="rgba(0,0,0,.075)"/><rect x="239" y="0" width="2" height="459" fill="rgba(0,0,0,.075)"/><rect x="299" y="0" width="2" height="459" fill="rgba(0,0,0,.075)"/><rect x="0" y="59" width="305" height="2" fill="rgba(0,0,0,.075)"/><rect x="0" y="119" width="305" height="2" fill="rgba(0,0,0,.075)"/><rect x="0" y="179" width="305" height="2" fill="rgba(0,0,0,.075)"/><rect x="0" y="239" width="305" height="2" fill="rgba(0,0,0,.075)"/><rect x="0" y="299" width="305" height="2" fill="rgba(0,0,0,.075)"/><rect x="0" y="359" width="305" height="2" fill="rgba(0,0,0,.075)"/><rect x="0" y="419" width="305" height="2" fill="rgba(0,0,0,.075)"/><rect x="0" y="0" width="60" height="60" fill="#d8e0ed"/><rect x="60" y="0" width="2" height="61" fill="#7cfc00"/><rect x="0" y="59" width="62" height="2" fill="#7cfc00"/><rect x="208.5" y="63" width="3" height="207" fill="#000"/><rect x="148.5" y="270" width="3" height="200" fill="#000"/><rect x="125" y="269" width="200" height="2" fill="#111"/><rect x="185.5" y="65.5" width="50" height="50" rx="6" fill="#fff" stroke="#333"/><rect x="188.5" y="68.5" width="44" height="44" rx="3.5" fill="url(#gstep)" stroke="#333"/><path d="M236 90.5 h9" stroke="#444" stroke-width="1.500" stroke-dasharray="1 1"/><rect x="245.5" y="65.5" width="110" height="50" rx="6" fill="url(#gact)" stroke="#444"/><rect x="254.5" y="65.5" width="1.4" height="50" fill="#333"/><rect x="245.5" y="125.5" width="110" height="50" rx="6" fill="url(#gtr)" stroke="#444"/><rect x="185" y="149.2" width="50" height="1.6" fill="#444"/><path d="M236 150.5 h9" stroke="#444" stroke-width="1.500" stroke-dasharray="1 1"/><rect x="185.5" y="185.5" width="50" height="50" rx="6" fill="url(#gstep)" stroke="#333"/><path d="M236 210.5 h9" stroke="#444" stroke-width="1.500" stroke-dasharray="1 1"/><rect x="245.5" y="185.5" width="110" height="50" rx="6" fill="url(#gact)" stroke="#444"/><rect x="254.5" y="185.5" width="1.4" height="50" fill="#333"/><rect x="185.5" y="305.5" width="110" height="50" rx="6" fill="url(#gtr)" stroke="#444"/><rect x="125" y="329.2" width="50" height="1.6" fill="#444"/><path d="M176 330.5 h9" stroke="#444" stroke-width="1.500" stroke-dasharray="1 1"/><rect x="125.5" y="365.5" width="50" height="50" rx="6" fill="url(#gstep)" stroke="#333"/><path d="M176 390.5 h9" stroke="#444" stroke-width="1.500" stroke-dasharray="1 1"/><rect x="185.5" y="365.5" width="110" height="50" rx="6" fill="url(#gact)" stroke="#444"/><rect x="194.5" y="365.5" width="1.4" height="50" fill="#333"/><rect x="185.5" y="425.5" width="110" height="50" rx="6" fill="url(#gtr)" stroke="#444"/><rect x="125" y="449.2" width="50" height="1.6" fill="#444"/><path d="M176 450.5 h9" stroke="#444" stroke-width="1.500" stroke-dasharray="1 1"/></svg>
<div class="t" style="left:201.29999999999995px;top:82.15px;font-size:14px;transform:scaleX(0.8642);">S1</div>
<div class="t" style="left:201.29999999999995px;top:202.15px;font-size:14px;transform:scaleX(0.9109);">S2</div>
<div class="t" style="left:141.29999999999995px;top:382.15px;font-size:14px;transform:scaleX(0.9109);">S3</div>
<div class="t" style="left:219.5px;top:135.6px;font-size:13px;transform:scaleX(0.8898);">T1</div>
<div class="t" style="left:159.5px;top:315.6px;font-size:13px;transform:scaleX(0.9557);">T2</div>
<div class="t" style="left:159.5px;top:435.6px;font-size:13px;transform:scaleX(0.9557);">T4</div>
<div class="t" style="left:257.5px;top:64.84px;transform:scaleX(0.8649);">N</div>
<div class="t" style="left:276px;top:64.84px;transform:scaleX(0.8147);">ST</div>
<div class="t" style="left:301.5px;top:64.84px;transform:scaleX(0.8993);">Action3</div>
<div class="t" style="left:257.5px;top:184.84px;transform:scaleX(0.8649);">N</div>
<div class="t" style="left:276px;top:184.84px;transform:scaleX(0.8147);">ST</div>
<div class="t" style="left:301.5px;top:184.84px;transform:scaleX(0.8993);">Action3</div>
<div class="t" style="left:197.5px;top:364.84px;transform:scaleX(0.8649);">N</div>
<div class="t" style="left:216px;top:364.84px;transform:scaleX(0.8147);">ST</div>
<div class="t" style="left:241.5px;top:364.84px;transform:scaleX(0.8993);">Action3</div>
<div class="t" style="left:293px;top:142.8px;font-size:13px;transform:scaleX(0.8421);">ST</div>
<div class="t" style="left:233px;top:322.8px;font-size:13px;transform:scaleX(0.8421);">ST</div>
<div class="t" style="left:233px;top:442.8px;font-size:13px;transform:scaleX(0.8421);">ST</div>
<div class="t" style="left:176.5px;top:274.04px;color:#a3a3a3;transform:scaleX(0.8898);">Selection Divergence (OR)</div>
</div>
<div class="sb" style="left:1026px;top:127px;width:17px;height:459px;background:linear-gradient(90deg,#e9e9e9 0,#f4f4f4 25%,#f4f4f4 100%)"></div>
<svg class="a" style="left:1026px;top:127px;" width="17" height="459" viewBox="0 0 17 459"><polygon points="5.0,11.25 12.0,11.25 8.5,7.75" fill="#404040"/><polygon points="5.0,448.75 12.0,448.75 8.5,452.25" fill="#404040"/></svg>
<div class="thv" style="left:1027px;top:145px;width:15px;height:314px;"></div>
<svg class="a" style="left:1030.5px;top:298px;" width="8" height="9" viewBox="0 0 8 9"><rect x="0" y="0.0" width="8" height="1" fill="#555"/><rect x="0" y="1.0" width="8" height="1" fill="#fff" opacity=".8"/><rect x="0" y="3.5" width="8" height="1" fill="#555"/><rect x="0" y="4.5" width="8" height="1" fill="#fff" opacity=".8"/><rect x="0" y="7.0" width="8" height="1" fill="#555"/><rect x="0" y="8.0" width="8" height="1" fill="#fff" opacity=".8"/></svg>
<div class="sb" style="left:721px;top:586px;width:305px;height:17px;background:linear-gradient(180deg,#e9e9e9 0,#f4f4f4 25%,#f4f4f4 100%)"></div>
<svg class="a" style="left:721px;top:586px;" width="305" height="17" viewBox="0 0 305 17"><polygon points="10.25,5.0 10.25,12.0 6.75,8.5" fill="#404040"/><polygon points="294.75,5.0 294.75,12.0 298.25,8.5" fill="#404040"/></svg>
<div class="thh" style="left:740px;top:587px;width:141px;height:15px;"></div>
<svg class="a" style="left:806px;top:590.5px;" width="8" height="8" viewBox="0 0 8 8"><rect x="0" y="0" width="1" height="8" fill="#555"/><rect x="1" y="0" width="1" height="8" fill="#fff" opacity=".8"/><rect x="3" y="0" width="1" height="8" fill="#555"/><rect x="4" y="0" width="1" height="8" fill="#fff" opacity=".8"/><rect x="6" y="0" width="1" height="8" fill="#555"/><rect x="7" y="0" width="1" height="8" fill="#fff" opacity=".8"/></svg>
<div class="a" style="left:1043px;top:125px;width:20px;height:479px;background:#9aa9c6;border-left:1px solid #8a8a8a;border-top:1px solid #d8d8d8"></div>
<svg class="a" style="left:1044px;top:127px;" width="18" height="476" viewBox="0 0 18 476"><path d="M0 6 H12 Q16 6 16 10 V28 L0 45 Z" fill="#fff"/><path d="M0 45 L10 35 Q12 34 14 34 Q16 34 16 37 V57 L0 72 Z" fill="#f3f0e4"/><g stroke="#000" stroke-width="1.1" fill="none"><circle cx="4.400" cy="12.300" r="1.400"/><path d="M4.400 13.600V21M4.400 15.500H11.500M9.600 15.500V21M2.500 18.200H6.300M7.700 18.200H11.500"/></g><g stroke="#000" stroke-width="1.1" fill="none"><rect x="3.800" y="39" width="8.400" height="3.200"/><path d="M4.800 46.800h5.200M7.400 44.200v5.200"/></g><rect x="7.400" y="227" width="1.200" height="51" fill="#fff"/><rect x="10" y="227" width="1.200" height="51" fill="#fff"/><g stroke="#000" stroke-width="1.300" fill="none"><rect x="4.600" y="434.600" width="10" height="10"/><rect x="4.600" y="449.600" width="10" height="10"/><rect x="4.600" y="464.600" width="10" height="10"/></g><path d="M9.600 437v5.500M6.800 454.600h5.800M9.600 467l-3.200 2.600l3.200 2.600M13 467l-3.200 2.600l3.200 2.600" stroke="#000" stroke-width="1.300" fill="none"/></svg>
<div class="a" style="left:721px;top:127px;width:322px;height:1px;background:rgba(90,90,90,.38)"></div>
<div class="a" style="left:721px;top:128px;width:1px;height:476px;background:rgba(90,90,90,.25)"></div>
<!--SOLEXP-->
<div class="a" style="left:1069px;top:100px;width:205px;height:508px;background:#fff;border-radius:4px 4px 0 0"></div>
<div class="a" style="left:1069px;top:100px;width:205px;height:19px;background:#4d6082;border-radius:4px 4px 0 0"></div>
<div class="t" style="left:1072px;top:103.64px;color:#fff;letter-spacing:-0.108px;">Обозреватель решений</div>
<svg class="a" style="left:1230px;top:107px;" width="9" height="6" viewBox="0 0 9 6"><polygon points="0,0.5 8,0.5 4,5" fill="#d3d8e3"/></svg>
<svg class="a" style="left:1245px;top:104px;" width="8" height="11" viewBox="0 0 8 11"><path d="M1.500 0.500h4.500v5.500h-4.500zM4.700 0.500v5.500M0 6.500h8M3.800 6.500v4.500" stroke="#e3e7ef" stroke-width="1.100" fill="none"/></svg>
<svg class="a" style="left:1260px;top:105px;" width="9" height="9" viewBox="0 0 9 9"><path d="M0.500 0.500L8.500 8.500M8.500 0.500L0.500 8.500" stroke="#e3e7ef" stroke-width="1.500"/></svg>
<div class="a" style="left:1069px;top:119px;width:205px;height:26px;background:#bcc7d8"></div>
<div class="a" style="left:1069px;top:145px;width:1px;height:463px;background:#8e9bb5"></div>
<svg class="a" style="left:1076px;top:124px;" width="17" height="16" viewBox="0 0 17 16"><path d="M.5 1.500h4l1 1h6v8.500h-11z" fill="#efe3b4" stroke="#b5aa86" stroke-width=".8"/><rect x="2" y="4" width="9" height="1.500" fill="#fff"/><rect x="2" y="6.500" width="9" height="1.500" fill="#fff"/><path d="M1.500 4.500h1M1.500 7h1" stroke="#5f6f8f"/><rect x="4.500" y="8.500" width="12" height="6" fill="#fff" stroke="#44557a"/><path d="M6 10.500h2M9 10.500h6M6 12.500h2M9 12.500h6" stroke="#1d2f55" stroke-width="1"/></svg>
<div class="a" style="left:1098px;top:123px;width:1px;height:19px;background:#8b97ad"></div>
<svg class="a" style="left:1105px;top:124px;" width="16" height="16" viewBox="0 0 16 16"><rect x="0.500" y="1.500" width="15" height="13" fill="#f4f7fc" stroke="#5d76a8"/><rect x="1" y="2" width="14" height="2.500" fill="#6f9ae0"/><path d="M5 9a3 3 0 0 1 5-2l1-1v3h-3l1-1a2 2 0 0 0-3 1zM11 10a3 3 0 0 1-5 2l-1 1v-3h3l-1 1a2 2 0 0 0 3-1z" fill="#3f9b1f"/></svg>
<svg width="0" height="0" style="position:absolute"><defs><linearGradient id="gproj" x1="0" y1="0" x2="0" y2="1"><stop offset="0" stop-color="#c9d6e6"/><stop offset="1" stop-color="#7f99b8"/></linearGradient></defs></svg>
<div class="a" style="left:1070px;top:145px;width:204px;height:446px;overflow:hidden;background:#fff">
<svg class="a" style="left:11px;top:2px;" width="16" height="16" viewBox="0 0 16 16"><rect x="0.500" y="1.500" width="15" height="12" fill="#fdfdff" stroke="#8fa3c9"/><rect x="1" y="2" width="14" height="2.500" fill="#5e8fe0"/><path d="M8.500 12.500c-1.500-3-6-3-6 0s4.500 3 6 0" fill="none" stroke="#2f8fe6" stroke-width="1.800"/><path d="M8.500 12.500c1.500 3 6 3 6 0s-4.500-3-6 0" fill="none" stroke="#7a3fc4" stroke-width="1.800"/><path d="M8.500 12.500c1.200-2.500 4.500-2.900 5.700-1" fill="none" stroke="#4a62d8" stroke-width="1.800"/></svg>
<div class="t" style="left:32.5px;top:3.84px;letter-spacing:0.055px;">Решение "Project_All"&nbsp;&nbsp;(проекто</div>
<svg class="a" style="left:9.6px;top:26.4px;" width="6" height="6" viewBox="0 0 6 6"><polygon points="5.200,0.500 5.200,5.200 0.500,5.200" fill="#3f3f3f" stroke="#262626" stroke-width=".8"/></svg>
<svg class="a" style="left:30px;top:20px;" width="16" height="16" viewBox="0 0 16 16"><path d="M1.500 4.500h5l1.500 1.500h6v2h-9l-2.500 5.500h-1z" fill="#f5dc8c" stroke="#b9983d" stroke-width=".8" stroke-dasharray="1 .6"/><path d="M2.500 13.500l2.500-5.500h10.500l-3 5.500z" fill="#fae8a8" stroke="#b9983d" stroke-width=".8" stroke-dasharray="1 .6"/></svg>
<div class="t" style="left:51.5px;top:21.84px;letter-spacing:-0.113px;">Представления решений</div>
<svg class="a" style="left:49px;top:38px;" width="16" height="16" viewBox="0 0 16 16"><path d="M2.500 .5h7l3.500 3.500v11.500h-10.500z" fill="#fdfdfd" stroke="#8c8c8c"/><path d="M9.500 .5v3.500h3.500" fill="#e9e9e9" stroke="#8c8c8c"/></svg>
<div class="t" style="left:70.5px;top:39.84px;letter-spacing:-0.042px;">Deployment.isadpl</div>
<svg class="a" style="left:9.6px;top:62.4px;" width="6" height="6" viewBox="0 0 6 6"><polygon points="5.200,0.500 5.200,5.200 0.500,5.200" fill="#3f3f3f" stroke="#262626" stroke-width=".8"/></svg>
<svg class="a" style="left:30px;top:56px;" width="16" height="16" viewBox="0 0 16 16"><path d="M1 3.500q0-1 1-1h4l1 1h7q1 0 1 1v9h-14z" fill="#dfe6ef" stroke="#8d99a8" stroke-width=".8"/><rect x="1" y="5" width="14" height="9" rx="1" fill="url(#gproj)" stroke="#7d8da3" stroke-width=".8"/></svg>
<div class="t" style="left:51.5px;top:57.84px;letter-spacing:-0.548px;">Project_FBD</div>
<svg class="a" style="left:28.6px;top:80.4px;" width="6" height="6" viewBox="0 0 6 6"><polygon points="5.200,0.500 5.200,5.200 0.500,5.200" fill="#3f3f3f" stroke="#262626" stroke-width=".8"/></svg>
<svg class="a" style="left:49px;top:74px;" width="16" height="16" viewBox="0 0 16 16"><rect x=".5" y="1.500" width="15" height="13" rx="1.500" fill="#f3f4f6" stroke="#7b8594"/><path d="M6.500 3v9M9 3v9M11.500 3v9M14 3v9" stroke="#6f7b8c" stroke-width="1.100"/><rect x="2" y="10" width="1.300" height="2" fill="#d23b2a"/><rect x="4" y="10" width="1.300" height="2" fill="#3ca32c"/></svg>
<div class="t" style="left:70.5px;top:75.84px;letter-spacing:-0.623px;">Device1</div>
<svg class="a" style="left:47.6px;top:98.4px;" width="6" height="6" viewBox="0 0 6 6"><polygon points="5.200,0.500 5.200,5.200 0.500,5.200" fill="#3f3f3f" stroke="#262626" stroke-width=".8"/></svg>
<svg class="a" style="left:68px;top:92px;" width="16" height="16" viewBox="0 0 16 16"><rect x=".5" y=".5" width="15" height="15" fill="#e9edf2" stroke="#8e99a8"/><path d="M1 1h14l-14 14z" fill="#2b4f77"/></svg>
<div class="t" style="left:89.5px;top:93.84px;letter-spacing:-0.615px;">Resource1</div>
<svg class="a" style="left:66.6px;top:116.4px;" width="6" height="6" viewBox="0 0 6 6"><polygon points="5.200,0.500 5.200,5.200 0.500,5.200" fill="#3f3f3f" stroke="#262626" stroke-width=".8"/></svg>
<svg class="a" style="left:87px;top:110px;" width="16" height="16" viewBox="0 0 16 16"><rect x=".5" y=".5" width="9" height="10" fill="#fff" stroke="#1b3566" stroke-width="1.200"/><path d="M2.500 3h1M4.500 3h3.500M2.500 5.500h1M4.500 5.500h3.500" stroke="#3a5ea8"/><rect x="5.500" y="4.500" width="10" height="11" fill="#fff" stroke="#1b3566" stroke-width="1.200"/><path d="M7.500 7.500h1.500M10 7.500h4M7.500 10h1.500M10 10h4M7.500 12.500h1.500M10 12.500h4" stroke="#3a5ea8"/></svg>
<div class="t" style="left:108.5px;top:111.84px;letter-spacing:0.297px;">Программы</div>
<svg class="a" style="left:86px;top:132px;" width="6" height="10" viewBox="0 0 6 10"><polygon points="0.500,0.800 5,5 0.500,9.200" fill="#fff" stroke="#989898" stroke-width="1"/></svg>
<svg class="a" style="left:106px;top:128px;" width="16" height="16" viewBox="0 0 16 16"><rect x="0" y="0" width="16" height="16" rx="1.500" fill="#2d4f7c"/><rect x="5" y="3" width="7" height="10" fill="#fff"/><path d="M2.500 5.500h2.500M2.500 8h2.500M2.500 10.500h2.500M12 8h2" stroke="#fff" stroke-width="1.200"/></svg>
<div class="t" style="left:127.5px;top:129.84px;letter-spacing:-0.691px;">Prog_FBD</div>
<svg class="a" style="left:67px;top:150px;" width="6" height="10" viewBox="0 0 6 10"><polygon points="0.500,0.800 5,5 0.500,9.200" fill="#fff" stroke="#989898" stroke-width="1"/></svg>
<svg class="a" style="left:87px;top:146px;" width="16" height="16" viewBox="0 0 16 16"><path d="M.5 3q0-1 1-1h4l1 1.500h8.500v10.500h-14.500z" fill="#eef0f3" stroke="#8a919c" stroke-width=".9"/><rect x="2" y="5.500" width="12" height="7.500" fill="#dfe9fb" stroke="#8aa1cf" stroke-width=".6"/><path d="M3 7.500h4M3 9.500h3" stroke="#2a56c8" stroke-width="1.200"/><path d="M13 7v5.500h-5z" fill="#2a63e0"/></svg>
<div class="t" style="left:108.5px;top:147.84px;letter-spacing:-0.339px;">Lib</div>
<svg class="a" style="left:87px;top:164px;" width="16" height="16" viewBox="0 0 16 16"><path d="M.8 3.500l6-2.800v12.500l-6 2.800z" fill="#2c69a3" stroke="#1b4570" stroke-width=".7"/><path d="M6.800 .7l8.500 .8v11.500l-8.500 .2z" fill="#3f82c0" stroke="#1b4570" stroke-width=".7"/><path d="M.8 16l6-2.800 8.500-.2-5.500 2.500z" fill="#1f4f80"/><path d="M9.800 1v12.200M12.500 1.200v11.800" stroke="#e8f1fa" stroke-width="1.100"/><path d="M3.800 2.200v12.300" stroke="#6fa3d3" stroke-width="1"/></svg>
<div class="t" style="left:108.5px;top:165.84px;letter-spacing:-0.197px;">Глобальные пере</div>
<svg class="a" style="left:9.6px;top:188.4px;" width="6" height="6" viewBox="0 0 6 6"><polygon points="5.200,0.500 5.200,5.200 0.500,5.200" fill="#3f3f3f" stroke="#262626" stroke-width=".8"/></svg>
<svg class="a" style="left:30px;top:182px;" width="16" height="16" viewBox="0 0 16 16"><path d="M1 3.500q0-1 1-1h4l1 1h7q1 0 1 1v9h-14z" fill="#dfe6ef" stroke="#8d99a8" stroke-width=".8"/><rect x="1" y="5" width="14" height="9" rx="1" fill="url(#gproj)" stroke="#7d8da3" stroke-width=".8"/></svg>
<div class="t" style="left:51.5px;top:183.84px;letter-spacing:-0.438px;">Project_LD</div>
<svg class="a" style="left:28.6px;top:206.4px;" width="6" height="6" viewBox="0 0 6 6"><polygon points="5.200,0.500 5.200,5.200 0.500,5.200" fill="#3f3f3f" stroke="#262626" stroke-width=".8"/></svg>
<svg class="a" style="left:49px;top:200px;" width="16" height="16" viewBox="0 0 16 16"><rect x=".5" y="1.500" width="15" height="13" rx="1.500" fill="#f3f4f6" stroke="#7b8594"/><path d="M6.500 3v9M9 3v9M11.500 3v9M14 3v9" stroke="#6f7b8c" stroke-width="1.100"/><rect x="2" y="10" width="1.300" height="2" fill="#d23b2a"/><rect x="4" y="10" width="1.300" height="2" fill="#3ca32c"/></svg>
<div class="t" style="left:70.5px;top:201.84px;letter-spacing:-0.623px;">Device1</div>
<svg class="a" style="left:47.6px;top:224.4px;" width="6" height="6" viewBox="0 0 6 6"><polygon points="5.200,0.500 5.200,5.200 0.500,5.200" fill="#3f3f3f" stroke="#262626" stroke-width=".8"/></svg>
<svg class="a" style="left:68px;top:218px;" width="16" height="16" viewBox="0 0 16 16"><rect x=".5" y=".5" width="15" height="15" fill="#e9edf2" stroke="#8e99a8"/><path d="M1 1h14l-14 14z" fill="#2b4f77"/></svg>
<div class="t" style="left:89.5px;top:219.84px;letter-spacing:-0.615px;">Resource1</div>
<svg class="a" style="left:66.6px;top:242.4px;" width="6" height="6" viewBox="0 0 6 6"><polygon points="5.200,0.500 5.200,5.200 0.500,5.200" fill="#3f3f3f" stroke="#262626" stroke-width=".8"/></svg>
<svg class="a" style="left:87px;top:236px;" width="16" height="16" viewBox="0 0 16 16"><rect x=".5" y=".5" width="9" height="10" fill="#fff" stroke="#1b3566" stroke-width="1.200"/><path d="M2.500 3h1M4.500 3h3.500M2.500 5.500h1M4.500 5.500h3.500" stroke="#3a5ea8"/><rect x="5.500" y="4.500" width="10" height="11" fill="#fff" stroke="#1b3566" stroke-width="1.200"/><path d="M7.500 7.500h1.500M10 7.500h4M7.500 10h1.500M10 10h4M7.500 12.500h1.500M10 12.500h4" stroke="#3a5ea8"/></svg>
<div class="t" style="left:108.5px;top:237.84px;letter-spacing:0.297px;">Программы</div>
<svg class="a" style="left:86px;top:258px;" width="6" height="10" viewBox="0 0 6 10"><polygon points="0.500,0.800 5,5 0.500,9.200" fill="#fff" stroke="#989898" stroke-width="1"/></svg>
<div class="a" style="left:103.5px;top:253px;width:71px;height:18px;background:#f0f0f0;border:1px solid #d9d9d9;border-radius:3px"></div>
<svg class="a" style="left:106px;top:254px;" width="16" height="16" viewBox="0 0 16 16"><rect x="0" y="0" width="16" height="16" rx="1.500" fill="#2d4f7c"/><path d="M1 8h3.500M4.500 5v6M7 5v6M7 8h2.500M12 8h3" stroke="#fff" stroke-width="1.200" fill="none"/><circle cx="10.800" cy="8" r="1.800" fill="none" stroke="#fff" stroke-width="1.100"/></svg>
<div class="t" style="left:127.5px;top:255.84px;letter-spacing:-0.625px;">Prog_LD</div>
<svg class="a" style="left:67px;top:276px;" width="6" height="10" viewBox="0 0 6 10"><polygon points="0.500,0.800 5,5 0.500,9.200" fill="#fff" stroke="#989898" stroke-width="1"/></svg>
<svg class="a" style="left:87px;top:272px;" width="16" height="16" viewBox="0 0 16 16"><path d="M.5 3q0-1 1-1h4l1 1.500h8.500v10.500h-14.500z" fill="#eef0f3" stroke="#8a919c" stroke-width=".9"/><rect x="2" y="5.500" width="12" height="7.500" fill="#dfe9fb" stroke="#8aa1cf" stroke-width=".6"/><path d="M3 7.500h4M3 9.500h3" stroke="#2a56c8" stroke-width="1.200"/><path d="M13 7v5.500h-5z" fill="#2a63e0"/></svg>
<div class="t" style="left:108.5px;top:273.84px;letter-spacing:-0.339px;">Lib</div>
<svg class="a" style="left:87px;top:290px;" width="16" height="16" viewBox="0 0 16 16"><path d="M.8 3.500l6-2.800v12.500l-6 2.800z" fill="#2c69a3" stroke="#1b4570" stroke-width=".7"/><path d="M6.800 .7l8.500 .8v11.500l-8.500 .2z" fill="#3f82c0" stroke="#1b4570" stroke-width=".7"/><path d="M.8 16l6-2.800 8.500-.2-5.500 2.500z" fill="#1f4f80"/><path d="M9.800 1v12.200M12.500 1.200v11.800" stroke="#e8f1fa" stroke-width="1.100"/><path d="M3.800 2.200v12.300" stroke="#6fa3d3" stroke-width="1"/></svg>
<div class="t" style="left:108.5px;top:291.84px;letter-spacing:-0.197px;">Глобальные пере</div>
<svg class="a" style="left:9.6px;top:314.4px;" width="6" height="6" viewBox="0 0 6 6"><polygon points="5.200,0.500 5.200,5.200 0.500,5.200" fill="#3f3f3f" stroke="#262626" stroke-width=".8"/></svg>
<svg class="a" style="left:30px;top:308px;" width="16" height="16" viewBox="0 0 16 16"><path d="M1 3.500q0-1 1-1h4l1 1h7q1 0 1 1v9h-14z" fill="#dfe6ef" stroke="#8d99a8" stroke-width=".8"/><rect x="1" y="5" width="14" height="9" rx="1" fill="url(#gproj)" stroke="#7d8da3" stroke-width=".8"/></svg>
<div class="t" style="left:51.5px;top:309.84px;font-weight:700;letter-spacing:-0.487px;">Project_SFC</div>
<svg class="a" style="left:28.6px;top:332.4px;" width="6" height="6" viewBox="0 0 6 6"><polygon points="5.200,0.500 5.200,5.200 0.500,5.200" fill="#3f3f3f" stroke="#262626" stroke-width=".8"/></svg>
<svg class="a" style="left:49px;top:326px;" width="16" height="16" viewBox="0 0 16 16"><rect x=".5" y="1.500" width="15" height="13" rx="1.500" fill="#f3f4f6" stroke="#7b8594"/><path d="M6.500 3v9M9 3v9M11.500 3v9M14 3v9" stroke="#6f7b8c" stroke-width="1.100"/><rect x="2" y="10" width="1.300" height="2" fill="#d23b2a"/><rect x="4" y="10" width="1.300" height="2" fill="#3ca32c"/></svg>
<div class="t" style="left:70.5px;top:327.84px;letter-spacing:-0.623px;">Device1</div>
<svg class="a" style="left:47.6px;top:350.4px;" width="6" height="6" viewBox="0 0 6 6"><polygon points="5.200,0.500 5.200,5.200 0.500,5.200" fill="#3f3f3f" stroke="#262626" stroke-width=".8"/></svg>
<svg class="a" style="left:68px;top:344px;" width="16" height="16" viewBox="0 0 16 16"><rect x=".5" y=".5" width="15" height="15" fill="#e9edf2" stroke="#8e99a8"/><path d="M1 1h14l-14 14z" fill="#2b4f77"/></svg>
<div class="t" style="left:89.5px;top:345.84px;letter-spacing:-0.615px;">Resource1</div>
<svg class="a" style="left:66.6px;top:368.4px;" width="6" height="6" viewBox="0 0 6 6"><polygon points="5.200,0.500 5.200,5.200 0.500,5.200" fill="#3f3f3f" stroke="#262626" stroke-width=".8"/></svg>
<svg class="a" style="left:87px;top:362px;" width="16" height="16" viewBox="0 0 16 16"><rect x=".5" y=".5" width="9" height="10" fill="#fff" stroke="#1b3566" stroke-width="1.200"/><path d="M2.500 3h1M4.500 3h3.500M2.500 5.500h1M4.500 5.500h3.500" stroke="#3a5ea8"/><rect x="5.500" y="4.500" width="10" height="11" fill="#fff" stroke="#1b3566" stroke-width="1.200"/><path d="M7.500 7.500h1.500M10 7.500h4M7.500 10h1.500M10 10h4M7.500 12.500h1.500M10 12.500h4" stroke="#3a5ea8"/></svg>
<div class="t" style="left:108.5px;top:363.84px;letter-spacing:0.297px;">Программы</div>
<svg class="a" style="left:86px;top:384px;" width="6" height="10" viewBox="0 0 6 10"><polygon points="0.500,0.800 5,5 0.500,9.200" fill="#fff" stroke="#989898" stroke-width="1"/></svg>
<svg class="a" style="left:106px;top:380px;" width="16" height="16" viewBox="0 0 16 16"><rect x="0" y="0" width="16" height="16" rx="1.500" fill="#2d4f7c"/><rect x="5.500" y="2" width="5" height="3.500" fill="#fff"/><rect x="2" y="10.500" width="4.500" height="3.500" fill="#fff"/><rect x="9.500" y="10.500" width="4.500" height="3.500" fill="#fff"/><path d="M8 5.500v2.500M4.200 10.500v-2.500h7.600v2.500M6.500 7h3" stroke="#fff" stroke-width="1.100" fill="none"/></svg>
<div class="t" style="left:127.5px;top:381.84px;letter-spacing:-0.816px;">Prog_SFC</div>
<svg class="a" style="left:67px;top:402px;" width="6" height="10" viewBox="0 0 6 10"><polygon points="0.500,0.800 5,5 0.500,9.200" fill="#fff" stroke="#989898" stroke-width="1"/></svg>
<svg class="a" style="left:87px;top:398px;" width="16" height="16" viewBox="0 0 16 16"><path d="M.5 3q0-1 1-1h4l1 1.500h8.500v10.500h-14.500z" fill="#eef0f3" stroke="#8a919c" stroke-width=".9"/><rect x="2" y="5.500" width="12" height="7.500" fill="#dfe9fb" stroke="#8aa1cf" stroke-width=".6"/><path d="M3 7.500h4M3 9.500h3" stroke="#2a56c8" stroke-width="1.200"/><path d="M13 7v5.500h-5z" fill="#2a63e0"/></svg>
<div class="t" style="left:108.5px;top:399.84px;letter-spacing:-0.339px;">Lib</div>
<svg class="a" style="left:87px;top:416px;" width="16" height="16" viewBox="0 0 16 16"><path d="M.8 3.500l6-2.800v12.500l-6 2.800z" fill="#2c69a3" stroke="#1b4570" stroke-width=".7"/><path d="M6.800 .7l8.500 .8v11.500l-8.500 .2z" fill="#3f82c0" stroke="#1b4570" stroke-width=".7"/><path d="M.8 16l6-2.800 8.500-.2-5.500 2.500z" fill="#1f4f80"/><path d="M9.800 1v12.200M12.500 1.200v11.800" stroke="#e8f1fa" stroke-width="1.100"/><path d="M3.800 2.200v12.300" stroke="#6fa3d3" stroke-width="1"/></svg>
<div class="t" style="left:108.5px;top:417.84px;letter-spacing:-0.197px;">Глобальные пере</div>
</div>
<div class="sb" style="left:1070px;top:591px;width:204px;height:16px;background:linear-gradient(180deg,#e9e9e9 0,#f4f4f4 25%,#f4f4f4 100%)"></div>
<svg class="a" style="left:1070px;top:591px;" width="204" height="16" viewBox="0 0 204 16"><polygon points="10.25,4.5 10.25,11.5 6.75,8.0" fill="#404040"/><polygon points="193.75,4.5 193.75,11.5 197.25,8.0" fill="#404040"/></svg>
<div class="thh" style="left:1088px;top:592px;width:135px;height:14px;"></div>
<svg class="a" style="left:1152px;top:595.0px;" width="8" height="8" viewBox="0 0 8 8"><rect x="0" y="0" width="1" height="8" fill="#555"/><rect x="1" y="0" width="1" height="8" fill="#fff" opacity=".8"/><rect x="3" y="0" width="1" height="8" fill="#555"/><rect x="4" y="0" width="1" height="8" fill="#fff" opacity=".8"/><rect x="6" y="0" width="1" height="8" fill="#555"/><rect x="7" y="0" width="1" height="8" fill="#fff" opacity=".8"/></svg>
<div class="a" style="left:1070px;top:607px;width:204px;height:1px;background:#fff"></div>
<!--OUTPUT-->
<div class="a" style="left:27px;top:614px;width:1247px;height:117px;background:#fff;border-radius:4px 4px 0 0"></div>
<div class="a" style="left:27px;top:614px;width:1247px;height:19px;background:#fff2c8;border-radius:4px 4px 0 0"></div>
<div class="t" style="left:29.5px;top:617.64px;letter-spacing:-0.356px;">Вывод</div>
<svg class="a" style="left:1230px;top:621px;" width="9" height="6" viewBox="0 0 9 6"><polygon points="0,0.500 8,0.500 4,5" fill="#6b5a33"/></svg>
<svg class="a" style="left:1245px;top:618px;" width="8" height="11" viewBox="0 0 8 11"><path d="M1.500 0.500h4.500v5.500h-4.500zM4.700 0.500v5.500M0 6.500h8M3.800 6.500v4.500" stroke="#5b4b28" stroke-width="1.100" fill="none"/></svg>
<svg class="a" style="left:1260px;top:619px;" width="9" height="9" viewBox="0 0 9 9"><path d="M0.500 0.500L8.500 8.500M8.500 0.500L0.500 8.500" stroke="#5b4b28" stroke-width="1.500"/></svg>
<div class="a" style="left:27px;top:633px;width:1247px;height:26px;background:#bcc7d8"></div>
<div class="t" style="left:34.5px;top:641.44px;color:#101018;letter-spacing:-0.221px;"><u>П</u>оказать выходные данные от:</div>
<div class="a" style="left:210px;top:637px;width:300px;height:19px;background:#fcfcfd;border:1px solid #8e9bb5"></div>
<div class="t" style="left:215px;top:641.44px;letter-spacing:-0.083px;">Построение</div>
<svg class="a" style="left:500px;top:644px;" width="8" height="5" viewBox="0 0 8 5"><polygon points="0,0 7,0 3.500,4" fill="#1b1b1b"/></svg>
<div class="sep" style="left:516px;top:636px;width:1px;height:21px;"></div>
<div class="sep" style="left:545px;top:636px;width:1px;height:21px;"></div>
<div class="sep" style="left:596px;top:636px;width:1px;height:21px;"></div>
<div class="sep" style="left:625px;top:636px;width:1px;height:21px;"></div>
<svg class="a" style="left:523px;top:638px;" width="16" height="16" viewBox="0 0 16 16"><path d="M3.500 .5h7l2.500 2.500v9h-10z" fill="#d9dde4" stroke="#9aa1ad"/><path d="M5 4.500h5M5 6.500h6" stroke="#a7aeba"/><path d="M8 15.500v-6M4.500 11.500l3.500-4 3.500 4z" fill="#aab1bd" stroke="#8f96a3" stroke-width=".8"/></svg>
<svg class="a" style="left:552px;top:638px;" width="16" height="16" viewBox="0 0 16 16"><path d="M6.500 .5h6l2.500 2.500v9h-8.500z" fill="#d9dde4" stroke="#9aa1ad"/><path d="M8 4.500h5M8 6.500h5" stroke="#a7aeba"/><path d="M.5 11l5-4.500v3h5v3h-5v3z" fill="#b4bac5" stroke="#8f96a3" stroke-width=".8"/></svg>
<svg class="a" style="left:574px;top:638px;" width="16" height="16" viewBox="0 0 16 16"><path d="M1.500 .5h6l2.500 2.500v9h-8.500z" fill="#d9dde4" stroke="#9aa1ad"/><path d="M3 4.500h5M3 6.500h5" stroke="#a7aeba"/><path d="M15.500 11l-5-4.500v3h-5v3h5v3z" fill="#b4bac5" stroke="#8f96a3" stroke-width=".8"/></svg>
<svg class="a" style="left:603px;top:638px;" width="16" height="16" viewBox="0 0 16 16"><path d="M0 2.500h12M2 5h10M3 7.500h10M4 10h7" stroke="#5d6e90" stroke-width="1.100"/><path d="M8 7l7 8M15 7l-7 8" stroke="#e6351b" stroke-width="2.200"/></svg>
<svg class="a" style="left:632px;top:638px;" width="16" height="16" viewBox="0 0 16 16"><rect x=".5" y=".5" width="15" height="12.500" fill="#fff" stroke="#5d76a8"/><rect x="1" y="1" width="14" height="2.500" fill="#4f86e0"/><path d="M12.500 5v4h-7M8 6.500l-3 2.500 3 2.500z" stroke="#000" stroke-width="1.500" fill="#000"/></svg>
<div class="a" style="left:27px;top:659px;width:1230px;height:55px;overflow:hidden;background:#fff">
<div class="t" style="left:12.5px;top:-3.2px;font-family:'Liberation Mono',monospace;letter-spacing:-0.207px;">PROJECT_LD:Could not open the error file: DiaDCI.err &lt;C:\Program Files\ISaGRAF\6.1\CAM ISaGRAF 5\5.3\Bin\Lang\Russian\DiaDCI.err&gt;</div>
<div class="t" style="left:12.5px;top:11.8px;font-family:'Liberation Mono',monospace;letter-spacing:-0.260px;">------ Построение закончено ------</div>
<div class="t" style="left:12.5px;top:26.8px;font-family:'Liberation Mono',monospace;letter-spacing:-0.212px;">========== Построение: успешно: 3, с ошибками: 0, без изменений: 0, пропущено: 0 ==========</div>
</div>
<div class="sb" style="left:1257px;top:659px;width:17px;height:55px;background:linear-gradient(90deg,#e9e9e9 0,#f4f4f4 25%,#f4f4f4 100%)"></div>
<svg class="a" style="left:1257px;top:659px;" width="17" height="55" viewBox="0 0 17 55"><polygon points="5.0,11.25 12.0,11.25 8.5,7.75" fill="#777"/><polygon points="5.0,44.75 12.0,44.75 8.5,48.25" fill="#777"/></svg>
<div class="thv" style="left:1258px;top:687px;width:15px;height:7px;"></div>
<div class="sb" style="left:27px;top:714px;width:1230px;height:17px;background:linear-gradient(180deg,#e9e9e9 0,#f4f4f4 25%,#f4f4f4 100%)"></div>
<svg class="a" style="left:27px;top:714px;" width="1230" height="17" viewBox="0 0 1230 17"><polygon points="10.25,5.0 10.25,12.0 6.75,8.5" fill="#8a8a8a"/><polygon points="1219.75,5.0 1219.75,12.0 1223.25,8.5" fill="#8a8a8a"/></svg>
<div class="a" style="left:1257px;top:714px;width:17px;height:17px;background:#fff"></div>
<div class="a" style="left:0px;top:738px;width:1280px;height:23px;background:#293955"></div>
<div class="t" style="left:4px;top:743.44px;color:#fff;letter-spacing:0.042px;">Построение успешно завершено</div>
<div class="a" style="left:0px;top:760px;width:1280px;height:8px;background:linear-gradient(90deg,#6f809c 0,#8da3c2 3.5%,#a8c0de 6.5%,#a8c0de 77%,#8598b6 81%,#8396b4 100%);border-top:1px solid #c3d0e2"></div>
<div class="a" style="left:13px;top:762px;width:28px;height:28px;border-radius:50%;background:radial-gradient(circle at 50% 30%,#b9d3ea,#5c8fc4 60%,#2d5f9a);border:1px solid #1f3d63"></div>
<div class="a" style="left:77px;top:764px;width:23px;height:23px;border-radius:50%;background:#f3f5f8;border:1px solid #8a8f98"></div>
<div class="a" style="left:156px;top:765px;width:10px;height:8px;border-radius:50%;border:2px solid #e2b33a"></div>
<div class="a" style="left:184px;top:760.5px;width:59px;height:9px;background:linear-gradient(180deg,#f2f6fb,#d5e0ef);border:1px solid #3f4f6b;border-radius:3px 3px 0 0"></div>
<div class="a" style="left:200px;top:765px;width:13px;height:4px;background:#c9a24a"></div>
<div class="a" style="left:325px;top:765px;width:20px;height:4px;background:#2b3f9f;transform:skewX(20deg)"></div>
<div class="a" style="left:388px;top:764px;width:19px;height:12px;border-radius:50%;border:2px solid #d9262c;background:#fff"></div>
<div class="a" style="left:450px;top:765px;width:28px;height:6px;background:#8fd4cf;border-radius:8px 3px 0 0"></div>
<div class="a" style="left:571px;top:765px;width:28px;height:4px;background:#3a3f49;border-top:1px solid #6a7080"></div>
<div class="a" style="left:617px;top:760.5px;width:60px;height:9px;background:linear-gradient(180deg,#dbe6f4,#c1d2e8);border:1px solid #3f4f6b;border-radius:3px 3px 0 0"></div>
<div class="a" style="left:631px;top:764px;width:33px;height:5px;background:#7f96ba;border:1px solid #5b7096"></div>
<div class="a" style="left:679px;top:760.5px;width:60px;height:9px;background:linear-gradient(180deg,#dbe6f4,#c1d2e8);border:1px solid #3f4f6b;border-radius:3px 3px 0 0"></div>
<div class="a" style="left:695px;top:764px;width:28px;height:8px;background:#e6edf7;border:1px solid #5b7096;border-radius:8px 2px 0 0"></div>
<div class="a" style="left:1266px;top:761px;width:14px;height:7px;background:linear-gradient(180deg,#aab8cc,#8c9db8);border-left:1px solid #44526b;border-top:1px solid #d5deea"></div>
</body>
</html>
